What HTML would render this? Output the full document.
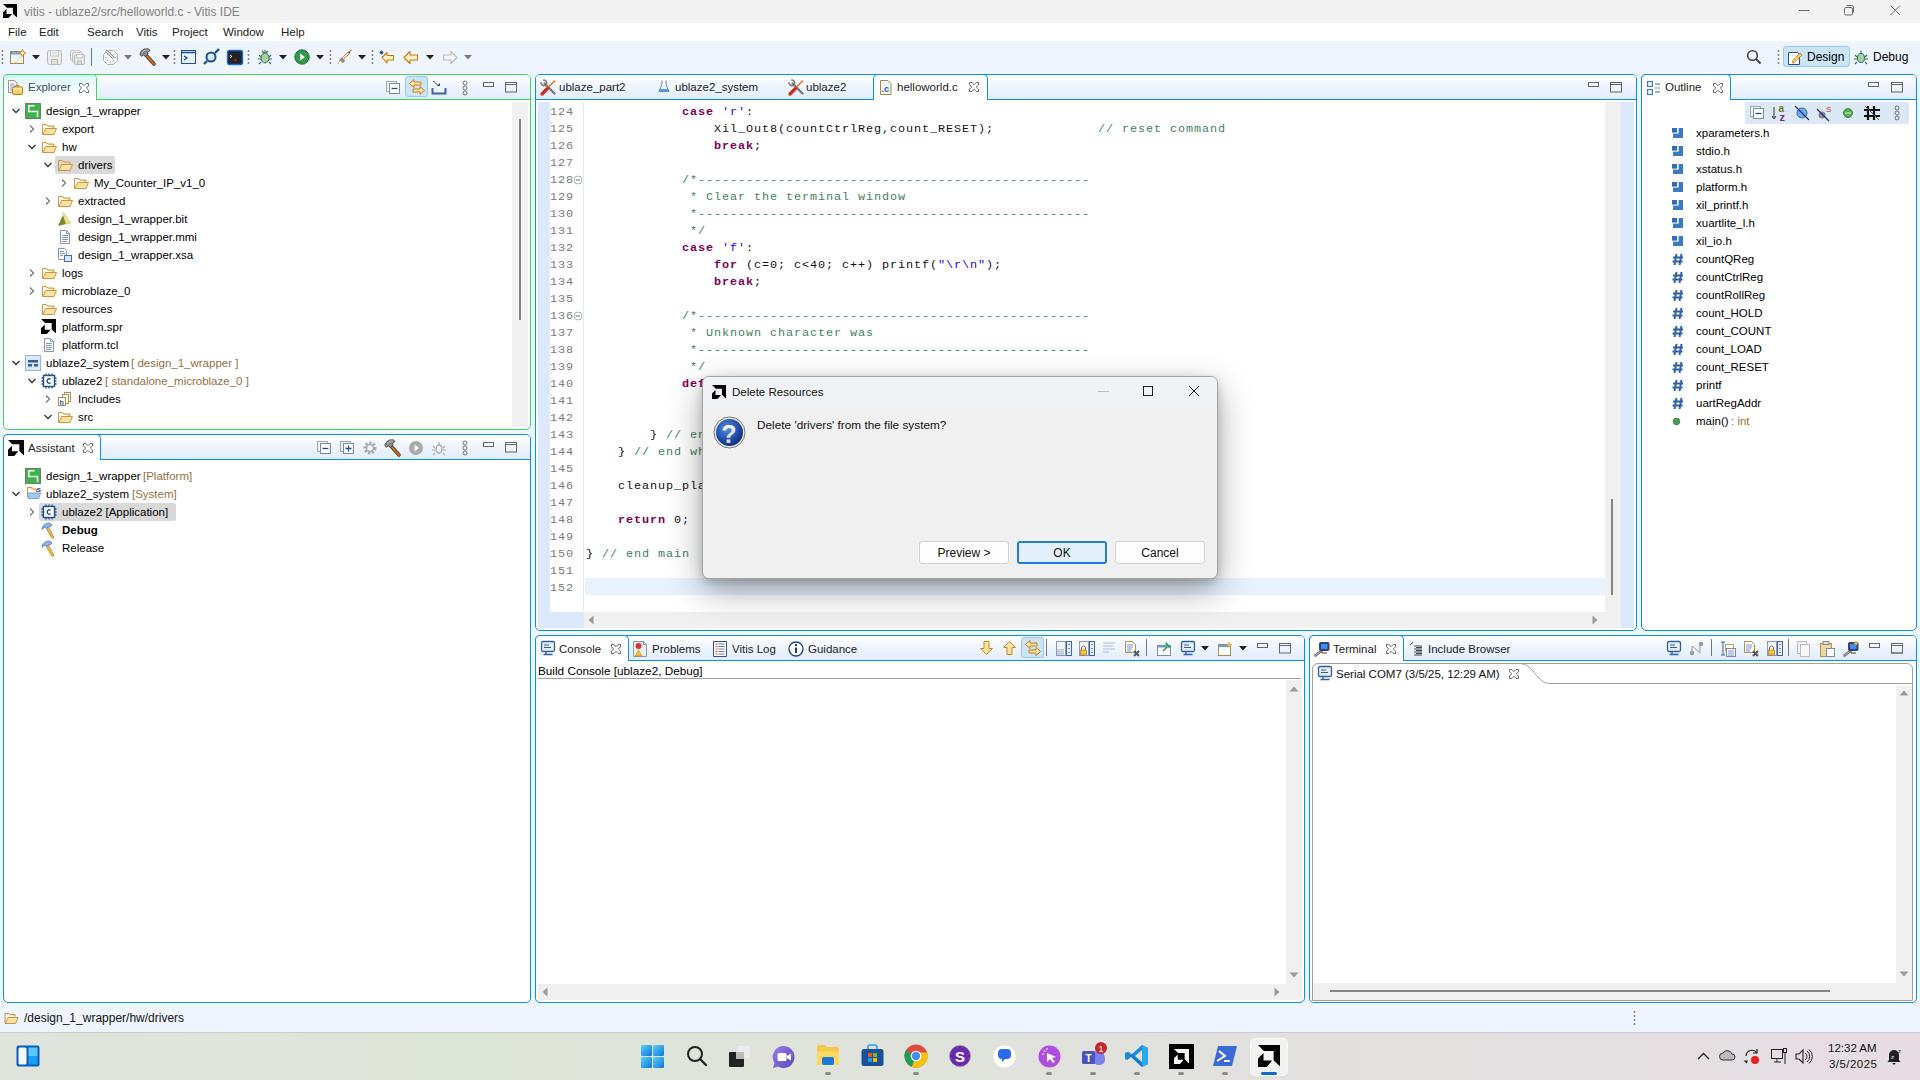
<!DOCTYPE html><html><head><meta charset="utf-8"><style>
html,body{margin:0;padding:0;width:1920px;height:1080px;overflow:hidden;background:#eff5fe;font-family:"Liberation Sans", sans-serif;}
.t{position:absolute;white-space:pre;font-family:"Liberation Sans", sans-serif;}
.m{position:absolute;white-space:pre;font-family:"Liberation Mono", monospace;font-size:11.8px;letter-spacing:0.92px;line-height:17px;height:17px;color:#111}
svg{overflow:visible}
.kw{color:#7f0055;font-weight:bold}
.st{color:#2a00ff}
.cm{color:#3f7f5f}
</style></head><body><div style="position:absolute;left:0px;top:0px;width:1920px;height:23px;background:#f3f3f3"></div><svg style="position:absolute;left:3px;top:4px" width="14" height="14" viewBox="0 0 100 100"><g fill="#000"><path d="M0 0H100V97L71 69V27H27Z"/><path d="M25 36V71H64L39 100H0V61Z"/></g></svg><div class="t" style="left:24px;top:3px;height:18px;line-height:18px;font-size:12px;color:#808080;">vitis - ublaze2/src/helloworld.c - Vitis IDE</div><div style="position:absolute;left:1799px;top:10px;width:10px;height:1px;background:#6a6a6a"></div><svg style="position:absolute;left:1844px;top:5px" width="12" height="12" viewBox="0 0 12 12"><rect x="0.5" y="2.5" width="8" height="7.5" rx="1.5" fill="none" stroke="#6a6a6a"/><path d="M2.5 0.5h5a2 2 0 0 1 2 2v5" fill="none" stroke="#6a6a6a"/></svg><svg style="position:absolute;left:1890px;top:5px" width="11" height="11" viewBox="0 0 11 11"><path d="M0.5 0.5l9.5 9.5M10 0.5l-9.5 9.5" stroke="#6a6a6a" stroke-width="1"/></svg><div style="position:absolute;left:0px;top:23px;width:1920px;height:18px;background:#fff"></div><div class="t" style="left:8px;top:23px;height:18px;line-height:18px;font-size:11.5px;color:#222;">File</div><div class="t" style="left:39px;top:23px;height:18px;line-height:18px;font-size:11.5px;color:#222;">Edit</div><div class="t" style="left:87px;top:23px;height:18px;line-height:18px;font-size:11.5px;color:#222;">Search</div><div class="t" style="left:136px;top:23px;height:18px;line-height:18px;font-size:11.5px;color:#222;">Vitis</div><div class="t" style="left:172px;top:23px;height:18px;line-height:18px;font-size:11.5px;color:#222;">Project</div><div class="t" style="left:223px;top:23px;height:18px;line-height:18px;font-size:11.5px;color:#222;">Window</div><div class="t" style="left:281px;top:23px;height:18px;line-height:18px;font-size:11.5px;color:#222;">Help</div><div style="position:absolute;left:0px;top:41px;width:1920px;height:33px;background:#eff5fe"></div><svg style="position:absolute;left:1px;top:49px" width="3" height="16" viewBox="0 0 3 16"><path d="M1.5 1v2M1.5 5v2M1.5 9v2M1.5 13v2" stroke="#888" stroke-width="1.6"/></svg><svg style="position:absolute;left:10px;top:49px" width="16" height="16" viewBox="0 0 16 16"><rect x="0.5" y="2.5" width="13" height="12" fill="#eef6fc" stroke="#a08a50"/><rect x="1" y="3" width="12" height="2.5" fill="#5a9ae0"/><path d="M2 4h1.5M4.5 4h1.5M7 4h1.5" stroke="#cfe4fa" stroke-width="0.8"/><path d="M3 14c4-1 7-4 9-8" stroke="#f5e0a0" stroke-width="1.2" fill="none"/><path d="M12.5 0.5l1.2 2.3 2.3 1.2-2.3 1.2-1.2 2.3-1.2-2.3-2.3-1.2 2.3-1.2z" fill="#fbe8b0" stroke="#c8861a" stroke-width="0.9"/></svg><svg style="position:absolute;left:32px;top:55px" width="8" height="5" viewBox="0 0 8 5"><path d="M0 0h8l-4 4.5z" fill="#222"/></svg><svg style="position:absolute;left:47px;top:50px" width="16" height="16" viewBox="0 0 16 16"><rect x="0.5" y="0.5" width="14" height="14" rx="2" fill="#ececec" stroke="#b8b8b8"/><rect x="3.5" y="0.5" width="8" height="5.5" fill="#f4f4f4" stroke="#c8c8c8"/><path d="M5 2.5h5M5 4h5" stroke="#d0d0d0" stroke-width="0.7"/><rect x="4.5" y="9.5" width="6" height="5" fill="#e2e2e2" stroke="#b8b8b8"/></svg><svg style="position:absolute;left:70px;top:50px" width="16" height="16" viewBox="0 0 16 16"><rect x="0.5" y="0.5" width="10" height="10" rx="1.5" fill="#eee" stroke="#c8c8c8"/><rect x="2.5" y="2.5" width="10" height="10" rx="1.5" fill="#eee" stroke="#c0c0c0"/><rect x="4.5" y="4.5" width="10" height="10" rx="1.5" fill="#ececec" stroke="#b8b8b8"/><rect x="6.5" y="4.5" width="6" height="3.5" fill="#f4f4f4" stroke="#c8c8c8"/><rect x="7.5" y="11" width="4" height="3.5" fill="#e2e2e2" stroke="#b8b8b8"/></svg><div style="position:absolute;left:91px;top:48px;width:1px;height:18px;background:#777"></div><svg style="position:absolute;left:103px;top:50px" width="15" height="15" viewBox="0 0 15 15"><path d="M4.5 0.5h6l4 4v6l-4 4h-6l-4-4v-6z" fill="#f2f4f6" stroke="#a8b4c0"/><path d="M7.5 2v1.5M7.5 11.5V13M2 7.5h1.5M11.5 7.5H13M3.8 3.8l1 1M10.2 10.2l1 1M11.2 3.8l-1 1M3.8 11.2l1-1" stroke="#999" stroke-width="0.8"/><path d="M2.5 1.5l7 7 1.5-1.5-7-7z" fill="#ddd" stroke="#888" stroke-width="0.8"/></svg><svg style="position:absolute;left:124px;top:55px" width="8" height="5" viewBox="0 0 8 5"><path d="M0 0h8l-4 4.5z" fill="#777"/></svg><svg style="position:absolute;left:139px;top:48px" width="18" height="18" viewBox="0 0 18 18"><path d="M6.5 6.5l8.5 9.5" stroke="#6a3a10" stroke-width="3.6" stroke-linecap="round"/><path d="M6.5 6.5l8.5 9.5" stroke="#c07a3a" stroke-width="1.8" stroke-linecap="round"/><path d="M0.8 6.5L2 3.5 5 1 9.5 0.8 11 2.5 8.5 4 9 6 6.5 8.5 4.5 7 2.5 8.2z" fill="#8a8a8a" stroke="#3a3a3a" stroke-width="0.8" stroke-linejoin="round"/><path d="M3 4.5l3-2.5h3" stroke="#c8c8c8" stroke-width="0.8" fill="none"/></svg><svg style="position:absolute;left:162px;top:55px" width="8" height="5" viewBox="0 0 8 5"><path d="M0 0h8l-4 4.5z" fill="#222"/></svg><svg style="position:absolute;left:173px;top:49px" width="3" height="16" viewBox="0 0 3 16"><path d="M1.5 1v2M1.5 5v2M1.5 9v2M1.5 13v2" stroke="#888" stroke-width="1.6"/></svg><svg style="position:absolute;left:181px;top:50px" width="15" height="14" viewBox="0 0 15 14"><rect x="0.5" y="0.5" width="14" height="13" fill="#e8f0fa" stroke="#1f4f9a"/><path d="M0.5 2.5h14" stroke="#1f4f9a" stroke-width="1.5"/><path d="M3 6l3 2-3 2" fill="none" stroke="#1f3f8a" stroke-width="1.3"/></svg><svg style="position:absolute;left:203px;top:48px" width="18" height="18" viewBox="0 0 18 18"><circle cx="8" cy="9" r="4.5" fill="#d8e8f8" stroke="#1f4f8f" stroke-width="2"/><path d="M4 13l-3 3M12 5l4-4" stroke="#1f4f8f" stroke-width="2.4"/></svg><svg style="position:absolute;left:227px;top:50px" width="16" height="15" viewBox="0 0 16 15"><rect x="0.5" y="0.5" width="15" height="14" rx="2" fill="#222" stroke="#1a6ae0" stroke-width="1.4"/><path d="M3 5l2 1.5-2 1.5" stroke="#fff" fill="none"/><path d="M7 10h3" stroke="#c33"/></svg><svg style="position:absolute;left:247px;top:49px" width="3" height="16" viewBox="0 0 3 16"><path d="M1.5 1v2M1.5 5v2M1.5 9v2M1.5 13v2" stroke="#888" stroke-width="1.6"/></svg><svg style="position:absolute;left:256px;top:48px" width="18" height="18" viewBox="0 0 18 18"><ellipse cx="9" cy="10" rx="4" ry="5" fill="#a9d0a0" stroke="#2f6f5f"/><path d="M9 5v-3M3 7l2 2M15 7l-2 2M2 11h3M16 11h-3M3 16l2-2M15 16l-2-2M6 3l2 2M12 3l-2 2" stroke="#2f6f5f" stroke-width="1.1"/></svg><svg style="position:absolute;left:279px;top:55px" width="8" height="5" viewBox="0 0 8 5"><path d="M0 0h8l-4 4.5z" fill="#222"/></svg><svg style="position:absolute;left:294px;top:49px" width="16" height="16" viewBox="0 0 16 16"><circle cx="8" cy="8" r="7.2" fill="#2f9a4a" stroke="#1f6a3a"/><path d="M6 4.5l5 3.5-5 3.5z" fill="#fff"/></svg><svg style="position:absolute;left:316px;top:55px" width="8" height="5" viewBox="0 0 8 5"><path d="M0 0h8l-4 4.5z" fill="#222"/></svg><svg style="position:absolute;left:329px;top:49px" width="3" height="16" viewBox="0 0 3 16"><path d="M1.5 1v2M1.5 5v2M1.5 9v2M1.5 13v2" stroke="#888" stroke-width="1.6"/></svg><svg style="position:absolute;left:337px;top:49px" width="17" height="16" viewBox="0 0 17 16"><path d="M1.5 15l1.5-4 7.5-7.5 4-2.5-2.5 4L4.5 12.5z" fill="#fbe0a0" stroke="#c8862a" stroke-width="0.8" stroke-linejoin="round"/><path d="M3.5 9.5l3.5 3.5" stroke="#8a8a8a" stroke-width="3.2"/><path d="M2 14.5l2-2" stroke="#fff" stroke-width="1.2"/><circle cx="12" cy="3.5" r="0.9" fill="#2a5aa0"/></svg><svg style="position:absolute;left:358px;top:55px" width="8" height="5" viewBox="0 0 8 5"><path d="M0 0h8l-4 4.5z" fill="#222"/></svg><svg style="position:absolute;left:371px;top:49px" width="3" height="16" viewBox="0 0 3 16"><path d="M1.5 1v2M1.5 5v2M1.5 9v2M1.5 13v2" stroke="#888" stroke-width="1.6"/></svg><svg style="position:absolute;left:379px;top:50px" width="18" height="14" viewBox="0 0 18 14"><path d="M3 7.5l5-5v3h6.5v4.5H8v3z" fill="#fff3cc" stroke="#c8780a" stroke-width="1.1" stroke-linejoin="round"/><path d="M0.5 2.5h4M2.5 0.5v4M1 1l3 3M4 1l-3 3" stroke="#2a4aa0" stroke-width="0.9"/></svg><svg style="position:absolute;left:403px;top:50px" width="16" height="14" viewBox="0 0 16 14"><path d="M1 7.5l6-6v3.5h7.5v5H7v3.5z" fill="#fff3cc" stroke="#c8780a" stroke-width="1.1" stroke-linejoin="round"/></svg><svg style="position:absolute;left:426px;top:55px" width="8" height="5" viewBox="0 0 8 5"><path d="M0 0h8l-4 4.5z" fill="#222"/></svg><svg style="position:absolute;left:442px;top:50px" width="16" height="14" viewBox="0 0 16 14"><path d="M15 7.5l-6-6v3.5H1.5v5H9v3.5z" fill="#f5f5f5" stroke="#bbb" stroke-width="1.1" stroke-linejoin="round"/></svg><svg style="position:absolute;left:464px;top:55px" width="8" height="5" viewBox="0 0 8 5"><path d="M0 0h8l-4 4.5z" fill="#777"/></svg><svg style="position:absolute;left:1746px;top:49px" width="16" height="16" viewBox="0 0 16 16"><circle cx="6.5" cy="6.5" r="4.8" fill="none" stroke="#444" stroke-width="1.6"/><path d="M10 10l4.5 4.5" stroke="#444" stroke-width="1.9"/></svg><svg style="position:absolute;left:1777px;top:49px" width="3" height="16" viewBox="0 0 3 16"><path d="M1.5 1v2M1.5 5v2M1.5 9v2M1.5 13v2" stroke="#888" stroke-width="1.6"/></svg><div style="position:absolute;left:1783px;top:46px;width:67px;height:21px;background:#cce4f7;border:1px solid #99c9ef;border-radius:3px;box-sizing:border-box"></div><svg style="position:absolute;left:1787px;top:50px" width="16" height="16" viewBox="0 0 16 16"><path d="M1.5 2.5h9l2 2v10h-11z" fill="#fff" stroke="#2a4a8a"/><path d="M5 13l1-3 7-7 2 2-7 7z" fill="#f5c860" stroke="#a07020" stroke-width="0.6"/></svg><div class="t" style="left:1807px;top:48px;height:18px;line-height:18px;font-size:12px;color:#000;">Design</div><svg style="position:absolute;left:1853px;top:49px" width="16" height="16" viewBox="0 0 16 16"><ellipse cx="8" cy="9" rx="3.5" ry="4.5" fill="#a9d0a0" stroke="#2f6f5f"/><path d="M8 4.5v-3M2 6l2 2M14 6l-2 2M1 10h3M15 10h-3M2 15l2-2M14 15l-2-2" stroke="#2f6f5f" stroke-width="1.1"/></svg><div class="t" style="left:1873px;top:48px;height:18px;line-height:18px;font-size:12px;color:#000;">Debug</div><div style="position:absolute;left:3px;top:74px;width:528px;height:356px;border:1px solid #40d45a;border-radius:5px;background:#fff;box-sizing:border-box;overflow:hidden"></div><div style="position:absolute;left:4px;top:75px;width:526px;height:24px;background:linear-gradient(#fefeff, #e0ecfd);border-radius:4px 4px 0 0"></div><div style="position:absolute;left:3px;top:99px;width:528px;height:1px;background:#40d45a"></div><div style="position:absolute;left:3px;top:74px;width:94px;height:26px;background:#fff;border-top:1px solid #40d45a;border-right:1px solid #40d45a;box-sizing:border-box;border-left:1px solid #40d45a;border-radius:5px 5px 0 0;"></div><div style="position:absolute;left:4px;top:99px;width:92px;height:1px;background:#fff"></div><div style="position:absolute;left:4px;top:75px;width:92px;height:24px;background:linear-gradient(#d8f6f8, #f4fdfd 60%, #ffffff);border-radius:4px 4px 0 0"></div><svg style="position:absolute;left:7px;top:79px" width="17" height="17" viewBox="0 0 17 17"><path d="M1.5 1.5h6l2.5 2.5v9.5h-8.5z" fill="#fff" stroke="#a89070"/><path d="M3 5h4.5M3 7h5M3 9h5M3 11h5" stroke="#5a7ad0" stroke-width="0.8"/><defs><linearGradient id="fg1" x1="0" y1="0" x2="0" y2="1"><stop offset="0" stop-color="#fdf0b8"/><stop offset="1" stop-color="#f0c048"/></linearGradient></defs><path d="M8.5 8V6.5h3.5V8" fill="none" stroke="#b8801a"/><rect x="5.5" y="8" width="10" height="7.5" rx="1.3" fill="url(#fg1)" stroke="#b8801a"/></svg><div class="t" style="left:28px;top:78px;height:18px;line-height:18px;font-size:11.5px;color:#3a4f6a;">Explorer</div><svg style="position:absolute;left:79px;top:83px" width="10" height="10" viewBox="0 0 10 10"><path d="M0.5 0.5H2.8L5 2.7L7.2 0.5H9.5V2.8L7.3 5L9.5 7.2V9.5H7.2L5 7.3L2.8 9.5H0.5V7.2L2.7 5L0.5 2.8Z" fill="#fff" stroke="#555" stroke-width="0.9" stroke-linejoin="miter"/></svg><svg style="position:absolute;left:386px;top:81px" width="14" height="13" viewBox="0 0 14 13"><rect x="0.5" y="0.5" width="10" height="10" fill="#eef4fb" stroke="#9ab"/><rect x="3.5" y="2.5" width="10" height="10" fill="#fff" stroke="#7a8aa0"/><path d="M5.5 7.5h6" stroke="#1f4f8f" stroke-width="1.3"/></svg><div style="position:absolute;left:405px;top:76px;width:23px;height:21px;background:#cce4f7;border:1px solid #99c9ef;border-radius:3px;box-sizing:border-box"></div><svg style="position:absolute;left:409px;top:79px" width="16" height="16" viewBox="0 0 16 16"><path d="M0.5 4.5L5 0.5V3H12V6H5V8.5Z" fill="#fce7b0" stroke="#c97a10" stroke-width="1" stroke-linejoin="round"/><path d="M15.5 11.5L11 7.5V10H4V13H11V15.5Z" fill="#fce7b0" stroke="#c97a10" stroke-width="1" stroke-linejoin="round"/></svg><svg style="position:absolute;left:431px;top:80px" width="16" height="15" viewBox="0 0 16 15"><path d="M2 1l6 5" stroke="#1f3f8f" stroke-width="0.9"/><path d="M6 6h3v-3z" fill="#1f3f8f"/><path d="M1.5 8v5.5h13v-5.5" fill="none" stroke="#3f62a8" stroke-width="2"/></svg><svg style="position:absolute;left:462px;top:80px" width="6" height="16" viewBox="0 0 6 16"><circle cx="3" cy="3" r="2" fill="none" stroke="#666" stroke-width="0.9"/><circle cx="3" cy="8" r="2" fill="none" stroke="#666" stroke-width="0.9"/><circle cx="3" cy="13" r="2" fill="none" stroke="#666" stroke-width="0.9"/></svg><svg style="position:absolute;left:483px;top:82px" width="12" height="6" viewBox="0 0 12 6"><rect x="0.5" y="0.5" width="10" height="4" fill="none" stroke="#666"/></svg><svg style="position:absolute;left:505px;top:82px" width="12" height="11" viewBox="0 0 12 11"><rect x="0.5" y="0.5" width="11" height="9.5" fill="none" stroke="#666"/><path d="M0.5 2.5h11" stroke="#666"/></svg><div style="position:absolute;left:512px;top:102px;width:16px;height:325px;background:#f0f0f0"></div><div style="position:absolute;left:519px;top:119px;width:2px;height:201px;background:#858585"></div><div style="position:absolute;left:3px;top:434px;width:528px;height:569px;border:1px solid #0a90e6;border-radius:5px;background:#fff;box-sizing:border-box;overflow:hidden"></div><div style="position:absolute;left:4px;top:435px;width:526px;height:24px;background:linear-gradient(#fefeff, #e0ecfd);border-radius:4px 4px 0 0"></div><div style="position:absolute;left:3px;top:459px;width:528px;height:1px;background:#0a90e6"></div><div style="position:absolute;left:3px;top:434px;width:98px;height:26px;background:#fff;border-top:1px solid #0a90e6;border-right:1px solid #0a90e6;box-sizing:border-box;border-left:1px solid #0a90e6;border-radius:5px 5px 0 0;"></div><div style="position:absolute;left:4px;top:459px;width:96px;height:1px;background:#fff"></div><svg style="position:absolute;left:8px;top:440px" width="16" height="16" viewBox="0 0 100 100"><g fill="#000"><path d="M0 0H100V97L71 69V27H27Z"/><path d="M25 36V71H64L39 100H0V61Z"/></g></svg><div class="t" style="left:28px;top:439px;height:18px;line-height:18px;font-size:11.5px;color:#222;">Assistant</div><svg style="position:absolute;left:83px;top:443px" width="10" height="10" viewBox="0 0 10 10"><path d="M0.5 0.5H2.8L5 2.7L7.2 0.5H9.5V2.8L7.3 5L9.5 7.2V9.5H7.2L5 7.3L2.8 9.5H0.5V7.2L2.7 5L0.5 2.8Z" fill="#fff" stroke="#555" stroke-width="0.9" stroke-linejoin="miter"/></svg><svg style="position:absolute;left:317px;top:441px" width="14" height="13" viewBox="0 0 14 13"><rect x="0.5" y="0.5" width="10" height="10" fill="#eef4fb" stroke="#9ab"/><rect x="3.5" y="2.5" width="10" height="10" fill="#fff" stroke="#7a8aa0"/><path d="M5.5 7.5h6" stroke="#1f4f8f" stroke-width="1.3"/></svg><svg style="position:absolute;left:340px;top:441px" width="14" height="13" viewBox="0 0 14 13"><rect x="0.5" y="0.5" width="10" height="10" fill="#eef4fb" stroke="#9ab"/><rect x="3.5" y="2.5" width="10" height="10" fill="#fff" stroke="#7a8aa0"/><path d="M5.5 7.5h6M8.5 4.5v6" stroke="#1f4f8f" stroke-width="1.3"/></svg><svg style="position:absolute;left:362px;top:440px" width="16" height="16" viewBox="0 0 16 16"><circle cx="8" cy="8" r="5" fill="none" stroke="#aaa" stroke-width="3" stroke-dasharray="2.2 1.5"/><circle cx="8" cy="8" r="3.5" fill="none" stroke="#aaa" stroke-width="1.5"/></svg><svg style="position:absolute;left:384px;top:439px" width="18" height="18" viewBox="0 0 18 18"><path d="M6.5 6.5l8.5 9.5" stroke="#6a3a10" stroke-width="3.6" stroke-linecap="round"/><path d="M6.5 6.5l8.5 9.5" stroke="#c07a3a" stroke-width="1.8" stroke-linecap="round"/><path d="M0.8 6.5L2 3.5 5 1 9.5 0.8 11 2.5 8.5 4 9 6 6.5 8.5 4.5 7 2.5 8.2z" fill="#8a8a8a" stroke="#3a3a3a" stroke-width="0.8" stroke-linejoin="round"/><path d="M3 4.5l3-2.5h3" stroke="#c8c8c8" stroke-width="0.8" fill="none"/></svg><svg style="position:absolute;left:408px;top:440px" width="16" height="16" viewBox="0 0 16 16"><circle cx="8" cy="8" r="7" fill="#aaa"/><path d="M6.5 4.5l4.5 3.5-4.5 3.5z" fill="#fff"/></svg><svg style="position:absolute;left:431px;top:440px" width="16" height="16" viewBox="0 0 16 16"><ellipse cx="8" cy="9" rx="3" ry="4" fill="none" stroke="#aaa" stroke-width="1.4"/><path d="M8 5v-3M2 6l2 2M14 6l-2 2M1 10h3M15 10h-3M2 15l2-2M14 15l-2-2" stroke="#aaa" stroke-width="1.1"/></svg><svg style="position:absolute;left:462px;top:440px" width="6" height="16" viewBox="0 0 6 16"><circle cx="3" cy="3" r="2" fill="none" stroke="#666" stroke-width="0.9"/><circle cx="3" cy="8" r="2" fill="none" stroke="#666" stroke-width="0.9"/><circle cx="3" cy="13" r="2" fill="none" stroke="#666" stroke-width="0.9"/></svg><svg style="position:absolute;left:483px;top:442px" width="12" height="6" viewBox="0 0 12 6"><rect x="0.5" y="0.5" width="10" height="4" fill="none" stroke="#666"/></svg><svg style="position:absolute;left:505px;top:442px" width="12" height="11" viewBox="0 0 12 11"><rect x="0.5" y="0.5" width="11" height="9.5" fill="none" stroke="#666"/><path d="M0.5 2.5h11" stroke="#666"/></svg><div style="position:absolute;left:535px;top:74px;width:1102px;height:557px;border:1px solid #0a90e6;border-radius:5px;background:#fff;box-sizing:border-box;overflow:hidden"></div><div style="position:absolute;left:536px;top:75px;width:1100px;height:24px;background:linear-gradient(#fefeff, #e0ecfd);border-radius:4px 4px 0 0"></div><div style="position:absolute;left:535px;top:99px;width:1102px;height:1px;background:#0a90e6"></div><div style="position:absolute;left:873px;top:74px;width:115px;height:26px;background:#fff;border-top:1px solid #0a90e6;border-right:1px solid #0a90e6;box-sizing:border-box;border-left:1px solid #0a90e6;border-radius:5px 5px 0 0;"></div><div style="position:absolute;left:874px;top:99px;width:113px;height:1px;background:#fff"></div><svg style="position:absolute;left:540px;top:79px" width="17" height="17" viewBox="0 0 17 17"><path d="M4.5 4.5l10 10" stroke="#7a7a7a" stroke-width="2.4" stroke-linecap="round"/><path d="M1.2 3.2a2.8 2.8 0 1 0 2-2" fill="none" stroke="#7a7a7a" stroke-width="1.6"/><path d="M8 8.5l6.5-6.5" stroke="#e8742a" stroke-width="1.6" stroke-linecap="round"/><path d="M2 15l5.5-5.5" stroke="#d42a1a" stroke-width="3.2" stroke-linecap="round"/></svg><div class="t" style="left:559px;top:78px;height:18px;line-height:18px;font-size:11.5px;color:#222;">ublaze_part2</div><svg style="position:absolute;left:658px;top:79px" width="12" height="15" viewBox="0 0 12 15"><path d="M4 1.5v4L1 12.5h10l-3-7v-4" fill="#fff" stroke="#6f8fb8" stroke-width="1.1"/><path d="M2.2 10h7.6l1 2.5h-9.6z" fill="#4f9ae0"/></svg><div class="t" style="left:675px;top:78px;height:18px;line-height:18px;font-size:11.5px;color:#222;">ublaze2_system</div><svg style="position:absolute;left:788px;top:79px" width="17" height="17" viewBox="0 0 17 17"><path d="M4.5 4.5l10 10" stroke="#7a7a7a" stroke-width="2.4" stroke-linecap="round"/><path d="M1.2 3.2a2.8 2.8 0 1 0 2-2" fill="none" stroke="#7a7a7a" stroke-width="1.6"/><path d="M8 8.5l6.5-6.5" stroke="#e8742a" stroke-width="1.6" stroke-linecap="round"/><path d="M2 15l5.5-5.5" stroke="#d42a1a" stroke-width="3.2" stroke-linecap="round"/></svg><div class="t" style="left:806px;top:78px;height:18px;line-height:18px;font-size:11.5px;color:#222;">ublaze2</div><svg style="position:absolute;left:880px;top:80px" width="12" height="15" viewBox="0 0 12 15"><path d="M0.5 0.5h7.5l3 3v11h-10.5z" fill="#eef3fa" stroke="#b08a40"/><text x="1.5" y="12" font-size="9" font-family="Liberation Sans" fill="#2b5fa8" font-weight="bold">.c</text></svg><div class="t" style="left:897px;top:78px;height:18px;line-height:18px;font-size:11.5px;color:#222;">helloworld.c</div><svg style="position:absolute;left:969px;top:82px" width="10" height="10" viewBox="0 0 10 10"><path d="M0.5 0.5H2.8L5 2.7L7.2 0.5H9.5V2.8L7.3 5L9.5 7.2V9.5H7.2L5 7.3L2.8 9.5H0.5V7.2L2.7 5L0.5 2.8Z" fill="#fff" stroke="#555" stroke-width="0.9" stroke-linejoin="miter"/></svg><svg style="position:absolute;left:1588px;top:82px" width="12" height="6" viewBox="0 0 12 6"><rect x="0.5" y="0.5" width="10" height="4" fill="none" stroke="#666"/></svg><svg style="position:absolute;left:1610px;top:82px" width="12" height="11" viewBox="0 0 12 11"><rect x="0.5" y="0.5" width="11" height="9.5" fill="none" stroke="#666"/><path d="M0.5 2.5h11" stroke="#666"/></svg><div style="position:absolute;left:1641px;top:74px;width:276px;height:557px;border:1px solid #0a90e6;border-radius:5px;background:#fff;box-sizing:border-box;overflow:hidden"></div><div style="position:absolute;left:1642px;top:75px;width:274px;height:24px;background:linear-gradient(#fefeff, #e0ecfd);border-radius:4px 4px 0 0"></div><div style="position:absolute;left:1641px;top:99px;width:276px;height:1px;background:#0a90e6"></div><div style="position:absolute;left:1641px;top:74px;width:90px;height:26px;background:#fff;border-top:1px solid #0a90e6;border-right:1px solid #0a90e6;box-sizing:border-box;border-left:1px solid #0a90e6;border-radius:5px 5px 0 0;"></div><div style="position:absolute;left:1642px;top:99px;width:88px;height:1px;background:#fff"></div><svg style="position:absolute;left:1647px;top:81px" width="14" height="14" viewBox="0 0 14 14"><rect x="0.5" y="0.5" width="5" height="5" fill="#dbe8f8" stroke="#3f72b8"/><rect x="0.5" y="8.5" width="5" height="5" fill="#dbe8f8" stroke="#3f72b8"/><path d="M8 3h5M8 7h2M11 7h2M8 11h5" stroke="#3f72b8" stroke-width="1"/></svg><div class="t" style="left:1665px;top:78px;height:18px;line-height:18px;font-size:11.5px;color:#222;">Outline</div><svg style="position:absolute;left:1713px;top:83px" width="10" height="10" viewBox="0 0 10 10"><path d="M0.5 0.5H2.8L5 2.7L7.2 0.5H9.5V2.8L7.3 5L9.5 7.2V9.5H7.2L5 7.3L2.8 9.5H0.5V7.2L2.7 5L0.5 2.8Z" fill="#fff" stroke="#555" stroke-width="0.9" stroke-linejoin="miter"/></svg><svg style="position:absolute;left:1868px;top:82px" width="12" height="6" viewBox="0 0 12 6"><rect x="0.5" y="0.5" width="10" height="4" fill="none" stroke="#666"/></svg><svg style="position:absolute;left:1891px;top:82px" width="12" height="11" viewBox="0 0 12 11"><rect x="0.5" y="0.5" width="11" height="9.5" fill="none" stroke="#666"/><path d="M0.5 2.5h11" stroke="#666"/></svg><div style="position:absolute;left:1745px;top:102px;width:164px;height:22px;background:#dde8f6"></div><div style="position:absolute;left:535px;top:635px;width:770px;height:368px;border:1px solid #0a90e6;border-radius:5px;background:#fff;box-sizing:border-box;overflow:hidden"></div><div style="position:absolute;left:536px;top:636px;width:768px;height:24px;background:linear-gradient(#fefeff, #e0ecfd);border-radius:4px 4px 0 0"></div><div style="position:absolute;left:535px;top:660px;width:770px;height:1px;background:#0a90e6"></div><div style="position:absolute;left:535px;top:635px;width:94px;height:26px;background:#fff;border-top:1px solid #0a90e6;border-right:1px solid #0a90e6;box-sizing:border-box;border-left:1px solid #0a90e6;border-radius:5px 5px 0 0;"></div><div style="position:absolute;left:536px;top:660px;width:92px;height:1px;background:#fff"></div><svg style="position:absolute;left:541px;top:641px" width="14" height="15" viewBox="0 0 14 15"><rect x="0.5" y="0.5" width="13" height="10" rx="1.5" fill="#e8eef8" stroke="#2f5f9f" stroke-width="1.3"/><path d="M3 4h5M3 6.5h7" stroke="#2f5f9f"/><path d="M5 11v2M2.5 13.5h9" stroke="#2f5f9f" stroke-width="1.3"/></svg><div class="t" style="left:559px;top:640px;height:18px;line-height:18px;font-size:11.5px;color:#222;">Console</div><svg style="position:absolute;left:611px;top:644px" width="10" height="10" viewBox="0 0 10 10"><path d="M0.5 0.5H2.8L5 2.7L7.2 0.5H9.5V2.8L7.3 5L9.5 7.2V9.5H7.2L5 7.3L2.8 9.5H0.5V7.2L2.7 5L0.5 2.8Z" fill="#fff" stroke="#555" stroke-width="0.9" stroke-linejoin="miter"/></svg><svg style="position:absolute;left:633px;top:641px" width="15" height="16" viewBox="0 0 15 16"><path d="M0.5 0.5h10l3 3v12h-13z" fill="#eef2f8" stroke="#8a98b0"/><path d="M10.5 0.5v3h3" fill="none" stroke="#8a98b0"/><circle cx="5.5" cy="5" r="3" fill="#e03030"/><path d="M5.5 9l3.5 6h-7z" fill="#f5c030" stroke="#c08a10" stroke-width="0.6"/></svg><div class="t" style="left:652px;top:640px;height:18px;line-height:18px;font-size:11.5px;color:#222;">Problems</div><svg style="position:absolute;left:713px;top:641px" width="14" height="16" viewBox="0 0 14 16"><path d="M0.5 0.5h13v15h-13z" fill="#fff" stroke="#2f4f9f"/><path d="M2.5 3h2M2.5 5.5h2M2.5 8h2M2.5 10.5h2M2.5 13h2" stroke="#e04040" stroke-width="1"/><path d="M5.5 3h6M5.5 5.5h6M5.5 8h6M5.5 10.5h6M5.5 13h6" stroke="#6a7ab0" stroke-width="1"/></svg><div class="t" style="left:732px;top:640px;height:18px;line-height:18px;font-size:11.5px;color:#222;">Vitis Log</div><svg style="position:absolute;left:788px;top:641px" width="16" height="16" viewBox="0 0 16 16"><circle cx="8" cy="8" r="7" fill="#fff" stroke="#1f3f7f" stroke-width="1.3"/><path d="M8 6.5v5.5" stroke="#1f3f7f" stroke-width="2"/><circle cx="8" cy="4" r="1.2" fill="#1f3f7f"/></svg><div class="t" style="left:808px;top:640px;height:18px;line-height:18px;font-size:11.5px;color:#222;">Guidance</div><div class="t" style="left:538px;top:662px;height:18px;line-height:18px;font-size:11.75px;color:#000;">Build Console [ublaze2, Debug]</div><div style="position:absolute;left:538px;top:678px;width:763px;height:1px;background:#a0a0a0"></div><div style="position:absolute;left:1286px;top:680px;width:16px;height:304px;background:#f0f0f0"></div><svg style="position:absolute;left:1289px;top:686px" width="10" height="6" viewBox="0 0 10 6"><path d="M0.5 5.5l4.5-5 4.5 5z" fill="#9a9a9a"/></svg><svg style="position:absolute;left:1289px;top:972px" width="10" height="6" viewBox="0 0 10 6"><path d="M0.5 0.5l4.5 5 4.5-5z" fill="#9a9a9a"/></svg><div style="position:absolute;left:538px;top:984px;width:764px;height:16px;background:#f0f0f0"></div><svg style="position:absolute;left:542px;top:987px" width="6" height="10" viewBox="0 0 6 10"><path d="M5.5 0.5l-5 4.5 5 4.5z" fill="#9a9a9a"/></svg><svg style="position:absolute;left:1274px;top:987px" width="6" height="10" viewBox="0 0 6 10"><path d="M0.5 0.5l5 4.5-5 4.5z" fill="#9a9a9a"/></svg><div style="position:absolute;left:1309px;top:635px;width:608px;height:368px;border:1px solid #0a90e6;border-radius:5px;background:#fff;box-sizing:border-box;overflow:hidden"></div><div style="position:absolute;left:1310px;top:636px;width:606px;height:24px;background:linear-gradient(#fefeff, #e0ecfd);border-radius:4px 4px 0 0"></div><div style="position:absolute;left:1309px;top:660px;width:608px;height:1px;background:#0a90e6"></div><div style="position:absolute;left:1309px;top:635px;width:95px;height:26px;background:#fff;border-top:1px solid #0a90e6;border-right:1px solid #0a90e6;box-sizing:border-box;border-left:1px solid #0a90e6;border-radius:5px 5px 0 0;"></div><div style="position:absolute;left:1310px;top:660px;width:93px;height:1px;background:#fff"></div><svg style="position:absolute;left:1314px;top:641px" width="16" height="16" viewBox="0 0 16 16"><path d="M1.5 14.5l5-4" stroke="#666" stroke-width="2.6" stroke-linecap="round"/><path d="M1.5 14.5l5-4" stroke="#ccc" stroke-width="1"/><rect x="5.5" y="1.5" width="9.5" height="8" rx="1" fill="#2a3a8a" stroke="#444"/><rect x="7" y="3" width="6.5" height="5" fill="#3a8ef0"/><path d="M8 10v2h5" fill="none" stroke="#444"/></svg><div class="t" style="left:1333px;top:640px;height:18px;line-height:18px;font-size:11.5px;color:#222;">Terminal</div><svg style="position:absolute;left:1386px;top:644px" width="10" height="10" viewBox="0 0 10 10"><path d="M0.5 0.5H2.8L5 2.7L7.2 0.5H9.5V2.8L7.3 5L9.5 7.2V9.5H7.2L5 7.3L2.8 9.5H0.5V7.2L2.7 5L0.5 2.8Z" fill="#fff" stroke="#555" stroke-width="0.9" stroke-linejoin="miter"/></svg><svg style="position:absolute;left:1409px;top:641px" width="16" height="16" viewBox="0 0 16 16"><path d="M1 4l3-3" stroke="#1f3f9f"/><path d="M5 5h8M5 8h8M5 11h8M5 14h8M7 6.5h6M7 9.5h6M7 12.5h6" stroke="#333" stroke-width="0.9"/></svg><div class="t" style="left:1428px;top:640px;height:18px;line-height:18px;font-size:11.5px;color:#222;">Include Browser</div><svg style="position:absolute;left:1869px;top:643px" width="12" height="6" viewBox="0 0 12 6"><rect x="0.5" y="0.5" width="10" height="4" fill="none" stroke="#666"/></svg><svg style="position:absolute;left:1891px;top:643px" width="12" height="11" viewBox="0 0 12 11"><rect x="0.5" y="0.5" width="11" height="9.5" fill="none" stroke="#666"/><path d="M0.5 2.5h11" stroke="#666"/></svg><div style="position:absolute;left:1312px;top:663px;width:601px;height:338px;border:1px solid #a0a0a0;border-radius:6px 6px 0 0;box-sizing:border-box;background:#fff"></div><svg style="position:absolute;left:1312px;top:663px" width="601" height="22" viewBox="0 0 601 22"><path d="M205 0.5 C 212 0.5, 216 2, 221 8 S 230 20.5, 238 20.5 H 601" fill="none" stroke="#a0a0a0"/></svg><svg style="position:absolute;left:1318px;top:666px" width="14" height="15" viewBox="0 0 14 15"><rect x="0.5" y="0.5" width="13" height="10" rx="1.5" fill="#e8eef8" stroke="#2f5f9f" stroke-width="1.3"/><path d="M3 4h5M3 6.5h7" stroke="#2f5f9f"/><path d="M5 11v2M2.5 13.5h9" stroke="#2f5f9f" stroke-width="1.3"/></svg><div class="t" style="left:1336px;top:665px;height:18px;line-height:18px;font-size:11.5px;color:#111;">Serial COM7 (3/5/25, 12:29 AM)</div><svg style="position:absolute;left:1509px;top:669px" width="10" height="10" viewBox="0 0 10 10"><path d="M0.5 0.5H2.8L5 2.7L7.2 0.5H9.5V2.8L7.3 5L9.5 7.2V9.5H7.2L5 7.3L2.8 9.5H0.5V7.2L2.7 5L0.5 2.8Z" fill="#fff" stroke="#555" stroke-width="0.9" stroke-linejoin="miter"/></svg><div style="position:absolute;left:1896px;top:686px;width:16px;height:298px;background:#f0f0f0"></div><svg style="position:absolute;left:1899px;top:690px" width="10" height="6" viewBox="0 0 10 6"><path d="M0.5 5.5l4.5-5 4.5 5z" fill="#9a9a9a"/></svg><svg style="position:absolute;left:1899px;top:971px" width="10" height="6" viewBox="0 0 10 6"><path d="M0.5 0.5l4.5 5 4.5-5z" fill="#9a9a9a"/></svg><div style="position:absolute;left:1313px;top:983px;width:599px;height:17px;background:#f0f0f0"></div><div style="position:absolute;left:1330px;top:990px;width:500px;height:2px;background:#858585"></div><svg style="position:absolute;left:11px;top:106px" width="10" height="10" viewBox="0 0 10 10"><path d="M1.5 3l3.5 3.5L8.5 3" fill="none" stroke="#333" stroke-width="1.3"/></svg><svg style="position:absolute;left:25px;top:103px" width="16" height="16" viewBox="0 0 16 16"><rect x="0.5" y="0.5" width="15" height="15" fill="#3bb54a" stroke="#777"/><path d="M3.5 2.8H9.5M3.8 2.5V8.5H12.5V14" fill="none" stroke="#fff" stroke-width="1.4"/></svg><div class="t" style="left:46px;top:102px;height:18px;line-height:18px;font-size:11.5px;color:#000;">design_1_wrapper</div><svg style="position:absolute;left:27px;top:124px" width="10" height="10" viewBox="0 0 10 10"><path d="M3 1.5l3.5 3.5L3 8.5" fill="none" stroke="#777" stroke-width="1.3"/></svg><svg style="position:absolute;left:41px;top:121px" width="16" height="16" viewBox="0 0 16 16"><path d="M1.5 3.5h4l1.5 1.5h6v2.5" fill="#f7dc9a" stroke="#c9963e"/><path d="M1.5 3.5V13.5h11.5l2.5-6h-11l-2.5 6" fill="#f9e2a6" stroke="#c9963e" stroke-linejoin="round"/></svg><div class="t" style="left:62px;top:120px;height:18px;line-height:18px;font-size:11.5px;color:#000;">export</div><svg style="position:absolute;left:27px;top:142px" width="10" height="10" viewBox="0 0 10 10"><path d="M1.5 3l3.5 3.5L8.5 3" fill="none" stroke="#333" stroke-width="1.3"/></svg><svg style="position:absolute;left:41px;top:139px" width="16" height="16" viewBox="0 0 16 16"><path d="M1.5 3.5h4l1.5 1.5h6v2.5" fill="#f7dc9a" stroke="#c9963e"/><path d="M1.5 3.5V13.5h11.5l2.5-6h-11l-2.5 6" fill="#f9e2a6" stroke="#c9963e" stroke-linejoin="round"/></svg><div class="t" style="left:62px;top:138px;height:18px;line-height:18px;font-size:11.5px;color:#000;">hw</div><div style="position:absolute;left:55px;top:156px;width:60px;height:18px;background:#d9d9d9;border-radius:2px"></div><svg style="position:absolute;left:43px;top:160px" width="10" height="10" viewBox="0 0 10 10"><path d="M1.5 3l3.5 3.5L8.5 3" fill="none" stroke="#333" stroke-width="1.3"/></svg><svg style="position:absolute;left:57px;top:157px" width="16" height="16" viewBox="0 0 16 16"><path d="M1.5 3.5h4l1.5 1.5h6v2.5" fill="#f7dc9a" stroke="#c9963e"/><path d="M1.5 3.5V13.5h11.5l2.5-6h-11l-2.5 6" fill="#f9e2a6" stroke="#c9963e" stroke-linejoin="round"/></svg><div class="t" style="left:78px;top:156px;height:18px;line-height:18px;font-size:11.5px;color:#000;">drivers</div><svg style="position:absolute;left:59px;top:178px" width="10" height="10" viewBox="0 0 10 10"><path d="M3 1.5l3.5 3.5L3 8.5" fill="none" stroke="#777" stroke-width="1.3"/></svg><svg style="position:absolute;left:73px;top:175px" width="16" height="16" viewBox="0 0 16 16"><path d="M1.5 3.5h4l1.5 1.5h6v2.5" fill="#f7dc9a" stroke="#c9963e"/><path d="M1.5 3.5V13.5h11.5l2.5-6h-11l-2.5 6" fill="#f9e2a6" stroke="#c9963e" stroke-linejoin="round"/></svg><div class="t" style="left:94px;top:174px;height:18px;line-height:18px;font-size:11.5px;color:#000;">My_Counter_IP_v1_0</div><svg style="position:absolute;left:43px;top:196px" width="10" height="10" viewBox="0 0 10 10"><path d="M3 1.5l3.5 3.5L3 8.5" fill="none" stroke="#777" stroke-width="1.3"/></svg><svg style="position:absolute;left:57px;top:193px" width="16" height="16" viewBox="0 0 16 16"><path d="M1.5 3.5h4l1.5 1.5h6v2.5" fill="#f7dc9a" stroke="#c9963e"/><path d="M1.5 3.5V13.5h11.5l2.5-6h-11l-2.5 6" fill="#f9e2a6" stroke="#c9963e" stroke-linejoin="round"/></svg><div class="t" style="left:78px;top:192px;height:18px;line-height:18px;font-size:11.5px;color:#000;">extracted</div><svg style="position:absolute;left:57px;top:211px" width="16" height="16" viewBox="0 0 16 16"><path d="M1 15L6 4l3 9z" fill="#7a8a2a"/><path d="M6 1l3 12 5-1z" fill="#f3e39a" stroke="#d9c060" stroke-width="0.6"/></svg><div class="t" style="left:78px;top:210px;height:18px;line-height:18px;font-size:11.5px;color:#000;">design_1_wrapper.bit</div><svg style="position:absolute;left:57px;top:229px" width="16" height="16" viewBox="0 0 16 16"><path d="M3.5 1.5h6l3 3v10h-9z" fill="#fff" stroke="#8a96ac"/><path d="M9.5 1.5v3h3" fill="none" stroke="#8a96ac"/><path d="M5 6.5h6M5 8.5h6M5 10.5h6M5 12.5h5" stroke="#7f96c4" stroke-width="1"/></svg><div class="t" style="left:78px;top:228px;height:18px;line-height:18px;font-size:11.5px;color:#000;">design_1_wrapper.mmi</div><svg style="position:absolute;left:57px;top:247px" width="16" height="16" viewBox="0 0 16 16"><path d="M1.5 1.5h6l2 2v9h-8z" fill="#fff" stroke="#8a96ac"/><path d="M3 4.5h4M3 6.5h5M3 8.5h3" stroke="#7f96c4" stroke-width="1"/><rect x="7.5" y="8.5" width="7" height="6" fill="#dbe8f8" stroke="#3d6fb4"/></svg><div class="t" style="left:78px;top:246px;height:18px;line-height:18px;font-size:11.5px;color:#000;">design_1_wrapper.xsa</div><svg style="position:absolute;left:27px;top:268px" width="10" height="10" viewBox="0 0 10 10"><path d="M3 1.5l3.5 3.5L3 8.5" fill="none" stroke="#777" stroke-width="1.3"/></svg><svg style="position:absolute;left:41px;top:265px" width="16" height="16" viewBox="0 0 16 16"><path d="M1.5 3.5h4l1.5 1.5h6v2.5" fill="#f7dc9a" stroke="#c9963e"/><path d="M1.5 3.5V13.5h11.5l2.5-6h-11l-2.5 6" fill="#f9e2a6" stroke="#c9963e" stroke-linejoin="round"/></svg><div class="t" style="left:62px;top:264px;height:18px;line-height:18px;font-size:11.5px;color:#000;">logs</div><svg style="position:absolute;left:27px;top:286px" width="10" height="10" viewBox="0 0 10 10"><path d="M3 1.5l3.5 3.5L3 8.5" fill="none" stroke="#777" stroke-width="1.3"/></svg><svg style="position:absolute;left:41px;top:283px" width="16" height="16" viewBox="0 0 16 16"><path d="M1.5 3.5h4l1.5 1.5h6v2.5" fill="#f7dc9a" stroke="#c9963e"/><path d="M1.5 3.5V13.5h11.5l2.5-6h-11l-2.5 6" fill="#f9e2a6" stroke="#c9963e" stroke-linejoin="round"/></svg><div class="t" style="left:62px;top:282px;height:18px;line-height:18px;font-size:11.5px;color:#000;">microblaze_0</div><svg style="position:absolute;left:41px;top:301px" width="16" height="16" viewBox="0 0 16 16"><path d="M1.5 3.5h4l1.5 1.5h6v2.5" fill="#f7dc9a" stroke="#c9963e"/><path d="M1.5 3.5V13.5h11.5l2.5-6h-11l-2.5 6" fill="#f9e2a6" stroke="#c9963e" stroke-linejoin="round"/></svg><div class="t" style="left:62px;top:300px;height:18px;line-height:18px;font-size:11.5px;color:#000;">resources</div><svg style="position:absolute;left:41px;top:319px" width="15" height="15" viewBox="0 0 100 100"><g fill="#000"><path d="M0 0H100V97L71 69V27H27Z"/><path d="M25 36V71H64L39 100H0V61Z"/></g></svg><div class="t" style="left:62px;top:318px;height:18px;line-height:18px;font-size:11.5px;color:#000;">platform.spr</div><svg style="position:absolute;left:41px;top:337px" width="16" height="16" viewBox="0 0 16 16"><path d="M3.5 1.5h6l3 3v10h-9z" fill="#fff" stroke="#8a96ac"/><path d="M9.5 1.5v3h3" fill="none" stroke="#8a96ac"/><path d="M5 6.5h6M5 8.5h6M5 10.5h6M5 12.5h5" stroke="#7f96c4" stroke-width="1"/></svg><div class="t" style="left:62px;top:336px;height:18px;line-height:18px;font-size:11.5px;color:#000;">platform.tcl</div><svg style="position:absolute;left:11px;top:358px" width="10" height="10" viewBox="0 0 10 10"><path d="M1.5 3l3.5 3.5L8.5 3" fill="none" stroke="#333" stroke-width="1.3"/></svg><svg style="position:absolute;left:25px;top:355px" width="16" height="16" viewBox="0 0 16 16"><rect x="0.5" y="0.5" width="15" height="15" fill="#dbe8f8" stroke="#3f72b8" stroke-dasharray="1 1"/><rect x="3" y="5" width="10" height="2.5" fill="#2f5f9f"/><rect x="3" y="9" width="4" height="2.5" fill="#2f5f9f"/><rect x="9" y="9" width="4" height="2.5" fill="#2f5f9f"/></svg><div class="t" style="left:46px;top:354px;height:18px;line-height:18px;font-size:11.5px;color:#000;">ublaze2_system</div><div class="t" style="left:131px;top:354px;height:18px;line-height:18px;font-size:11.5px;color:#93703f;">[ design_1_wrapper ]</div><svg style="position:absolute;left:27px;top:376px" width="10" height="10" viewBox="0 0 10 10"><path d="M1.5 3l3.5 3.5L8.5 3" fill="none" stroke="#333" stroke-width="1.3"/></svg><svg style="position:absolute;left:41px;top:373px" width="16" height="16" viewBox="0 0 16 16"><rect x="2.5" y="2.5" width="11" height="11" fill="#fff" stroke="#1f4f8f" stroke-width="1.4"/><path d="M5 0.5v2M8 0.5v2M11 0.5v2M5 13.5v2M8 13.5v2M11 13.5v2M0.5 5h2M0.5 8h2M0.5 11h2M13.5 5h2M13.5 8h2M13.5 11h2" stroke="#1f4f8f" stroke-width="1.3"/><path d="M9.6 6.2a2.2 2.2 0 1 0 0 3.6" fill="none" stroke="#1f4f8f" stroke-width="1.4"/></svg><div class="t" style="left:62px;top:372px;height:18px;line-height:18px;font-size:11.5px;color:#000;">ublaze2</div><div class="t" style="left:105px;top:372px;height:18px;line-height:18px;font-size:11.5px;color:#93703f;">[ standalone_microblaze_0 ]</div><svg style="position:absolute;left:43px;top:394px" width="10" height="10" viewBox="0 0 10 10"><path d="M3 1.5l3.5 3.5L3 8.5" fill="none" stroke="#777" stroke-width="1.3"/></svg><svg style="position:absolute;left:57px;top:391px" width="16" height="16" viewBox="0 0 16 16"><rect x="7.5" y="1.5" width="6" height="9" fill="#fff" stroke="#b09050"/><rect x="5.5" y="3.5" width="6" height="9" fill="#fff" stroke="#b09050"/><rect x="1.5" y="6.5" width="7" height="8" fill="#fff" stroke="#b09050"/><text x="2.5" y="13.5" font-size="7" font-family="Liberation Sans" fill="#2b4f9a" font-weight="bold">h</text></svg><div class="t" style="left:78px;top:390px;height:18px;line-height:18px;font-size:11.5px;color:#000;">Includes</div><svg style="position:absolute;left:43px;top:412px" width="10" height="10" viewBox="0 0 10 10"><path d="M1.5 3l3.5 3.5L8.5 3" fill="none" stroke="#333" stroke-width="1.3"/></svg><svg style="position:absolute;left:57px;top:409px" width="16" height="16" viewBox="0 0 16 16"><path d="M1.5 3.5h4l1.5 1.5h6v2.5" fill="#f7dc9a" stroke="#c9963e"/><path d="M1.5 3.5V13.5h11.5l2.5-6h-11l-2.5 6" fill="#f9e2a6" stroke="#c9963e" stroke-linejoin="round"/></svg><div class="t" style="left:78px;top:408px;height:18px;line-height:18px;font-size:11.5px;color:#000;">src</div><svg style="position:absolute;left:25px;top:468px" width="16" height="16" viewBox="0 0 16 16"><rect x="0.5" y="0.5" width="15" height="15" fill="#3bb54a" stroke="#777"/><path d="M3.5 2.8H9.5M3.8 2.5V8.5H12.5V14" fill="none" stroke="#fff" stroke-width="1.4"/></svg><div class="t" style="left:46px;top:467px;height:18px;line-height:18px;font-size:11.5px;color:#000;">design_1_wrapper</div><div class="t" style="left:143px;top:467px;height:18px;line-height:18px;font-size:11.5px;color:#93703f;">[Platform]</div><svg style="position:absolute;left:11px;top:489px" width="10" height="10" viewBox="0 0 10 10"><path d="M1.5 3l3.5 3.5L8.5 3" fill="none" stroke="#333" stroke-width="1.3"/></svg><svg style="position:absolute;left:26px;top:485px" width="16" height="16" viewBox="0 0 16 16"><path d="M1.5 2.5h4.5l1.5 1.5h3v3" fill="#f6d690" stroke="#c9963e"/><path d="M1.5 2.5V12" stroke="#c9963e"/><path d="M1.5 8h13l-1.8 5.5H2.5z" fill="#a8c8ec" stroke="#7aa4d0"/><text x="10.5" y="6.5" font-size="8" font-family="Liberation Sans" fill="#24508f" font-weight="bold">s</text></svg><div class="t" style="left:46px;top:485px;height:18px;line-height:18px;font-size:11.5px;color:#000;">ublaze2_system</div><div class="t" style="left:132px;top:485px;height:18px;line-height:18px;font-size:11.5px;color:#93703f;">[System]</div><div style="position:absolute;left:39px;top:503px;width:137px;height:18px;background:#d9d9d9;border-radius:2px"></div><svg style="position:absolute;left:27px;top:507px" width="10" height="10" viewBox="0 0 10 10"><path d="M3 1.5l3.5 3.5L3 8.5" fill="none" stroke="#777" stroke-width="1.3"/></svg><svg style="position:absolute;left:41px;top:504px" width="16" height="16" viewBox="0 0 16 16"><rect x="2.5" y="2.5" width="11" height="11" fill="#fff" stroke="#1f4f8f" stroke-width="1.4"/><path d="M5 0.5v2M8 0.5v2M11 0.5v2M5 13.5v2M8 13.5v2M11 13.5v2M0.5 5h2M0.5 8h2M0.5 11h2M13.5 5h2M13.5 8h2M13.5 11h2" stroke="#1f4f8f" stroke-width="1.3"/><path d="M9.6 6.2a2.2 2.2 0 1 0 0 3.6" fill="none" stroke="#1f4f8f" stroke-width="1.4"/></svg><div class="t" style="left:62px;top:503px;height:18px;line-height:18px;font-size:11.5px;color:#000;">ublaze2 [Application]</div><svg style="position:absolute;left:41px;top:522px" width="16" height="16" viewBox="0 0 16 16"><path d="M6.5 6l5 9" stroke="#b07a20" stroke-width="3" stroke-linecap="round"/><path d="M6.5 6l5 9" stroke="#f2c050" stroke-width="1.6" stroke-linecap="round"/><path d="M1 7.5C1 4 4 1 8.5 1L11 3 9.3 5 7.5 4.6 5.5 6.5 3.8 5.2C2.8 5.8 2 6.8 1 7.5Z" fill="#8ab8e8" stroke="#4a7ab0" stroke-width="0.8" stroke-linejoin="round"/></svg><div class="t" style="left:62px;top:521px;height:18px;line-height:18px;font-size:11.5px;color:#000;font-weight:bold">Debug</div><svg style="position:absolute;left:41px;top:540px" width="16" height="16" viewBox="0 0 16 16"><path d="M6.5 6l5 9" stroke="#b07a20" stroke-width="3" stroke-linecap="round"/><path d="M6.5 6l5 9" stroke="#f2c050" stroke-width="1.6" stroke-linecap="round"/><path d="M1 7.5C1 4 4 1 8.5 1L11 3 9.3 5 7.5 4.6 5.5 6.5 3.8 5.2C2.8 5.8 2 6.8 1 7.5Z" fill="#8ab8e8" stroke="#4a7ab0" stroke-width="0.8" stroke-linejoin="round"/></svg><div class="t" style="left:62px;top:539px;height:18px;line-height:18px;font-size:11.5px;color:#000;">Release</div><svg style="position:absolute;left:1672px;top:128px" width="11" height="10" viewBox="0 0 11 10"><rect x="0" y="0" width="5" height="4.6" fill="#2f6db8"/><rect x="6.6" y="0" width="4.4" height="10" fill="#3b7bc4"/><rect x="1" y="5.6" width="10" height="4.4" fill="#3b7bc4"/></svg><div class="t" style="left:1696px;top:124px;height:18px;line-height:18px;font-size:11.5px;color:#000;">xparameters.h</div><svg style="position:absolute;left:1672px;top:146px" width="11" height="10" viewBox="0 0 11 10"><rect x="0" y="0" width="5" height="4.6" fill="#2f6db8"/><rect x="6.6" y="0" width="4.4" height="10" fill="#3b7bc4"/><rect x="1" y="5.6" width="10" height="4.4" fill="#3b7bc4"/></svg><div class="t" style="left:1696px;top:142px;height:18px;line-height:18px;font-size:11.5px;color:#000;">stdio.h</div><svg style="position:absolute;left:1672px;top:164px" width="11" height="10" viewBox="0 0 11 10"><rect x="0" y="0" width="5" height="4.6" fill="#2f6db8"/><rect x="6.6" y="0" width="4.4" height="10" fill="#3b7bc4"/><rect x="1" y="5.6" width="10" height="4.4" fill="#3b7bc4"/></svg><div class="t" style="left:1696px;top:160px;height:18px;line-height:18px;font-size:11.5px;color:#000;">xstatus.h</div><svg style="position:absolute;left:1672px;top:182px" width="11" height="10" viewBox="0 0 11 10"><rect x="0" y="0" width="5" height="4.6" fill="#2f6db8"/><rect x="6.6" y="0" width="4.4" height="10" fill="#3b7bc4"/><rect x="1" y="5.6" width="10" height="4.4" fill="#3b7bc4"/></svg><div class="t" style="left:1696px;top:178px;height:18px;line-height:18px;font-size:11.5px;color:#000;">platform.h</div><svg style="position:absolute;left:1672px;top:200px" width="11" height="10" viewBox="0 0 11 10"><rect x="0" y="0" width="5" height="4.6" fill="#2f6db8"/><rect x="6.6" y="0" width="4.4" height="10" fill="#3b7bc4"/><rect x="1" y="5.6" width="10" height="4.4" fill="#3b7bc4"/></svg><div class="t" style="left:1696px;top:196px;height:18px;line-height:18px;font-size:11.5px;color:#000;">xil_printf.h</div><svg style="position:absolute;left:1672px;top:218px" width="11" height="10" viewBox="0 0 11 10"><rect x="0" y="0" width="5" height="4.6" fill="#2f6db8"/><rect x="6.6" y="0" width="4.4" height="10" fill="#3b7bc4"/><rect x="1" y="5.6" width="10" height="4.4" fill="#3b7bc4"/></svg><div class="t" style="left:1696px;top:214px;height:18px;line-height:18px;font-size:11.5px;color:#000;">xuartlite_l.h</div><svg style="position:absolute;left:1672px;top:236px" width="11" height="10" viewBox="0 0 11 10"><rect x="0" y="0" width="5" height="4.6" fill="#2f6db8"/><rect x="6.6" y="0" width="4.4" height="10" fill="#3b7bc4"/><rect x="1" y="5.6" width="10" height="4.4" fill="#3b7bc4"/></svg><div class="t" style="left:1696px;top:232px;height:18px;line-height:18px;font-size:11.5px;color:#000;">xil_io.h</div><svg style="position:absolute;left:1672px;top:253px" width="12" height="13" viewBox="0 0 12 13"><path d="M4.5 1L2.5 12M9.5 1L7.5 12M1 4.5h10M0.5 8.5h10" stroke="#2f62a8" stroke-width="2"/></svg><div class="t" style="left:1696px;top:250px;height:18px;line-height:18px;font-size:11.5px;color:#000;">countQReg</div><svg style="position:absolute;left:1672px;top:271px" width="12" height="13" viewBox="0 0 12 13"><path d="M4.5 1L2.5 12M9.5 1L7.5 12M1 4.5h10M0.5 8.5h10" stroke="#2f62a8" stroke-width="2"/></svg><div class="t" style="left:1696px;top:268px;height:18px;line-height:18px;font-size:11.5px;color:#000;">countCtrlReg</div><svg style="position:absolute;left:1672px;top:289px" width="12" height="13" viewBox="0 0 12 13"><path d="M4.5 1L2.5 12M9.5 1L7.5 12M1 4.5h10M0.5 8.5h10" stroke="#2f62a8" stroke-width="2"/></svg><div class="t" style="left:1696px;top:286px;height:18px;line-height:18px;font-size:11.5px;color:#000;">countRollReg</div><svg style="position:absolute;left:1672px;top:307px" width="12" height="13" viewBox="0 0 12 13"><path d="M4.5 1L2.5 12M9.5 1L7.5 12M1 4.5h10M0.5 8.5h10" stroke="#2f62a8" stroke-width="2"/></svg><div class="t" style="left:1696px;top:304px;height:18px;line-height:18px;font-size:11.5px;color:#000;">count_HOLD</div><svg style="position:absolute;left:1672px;top:325px" width="12" height="13" viewBox="0 0 12 13"><path d="M4.5 1L2.5 12M9.5 1L7.5 12M1 4.5h10M0.5 8.5h10" stroke="#2f62a8" stroke-width="2"/></svg><div class="t" style="left:1696px;top:322px;height:18px;line-height:18px;font-size:11.5px;color:#000;">count_COUNT</div><svg style="position:absolute;left:1672px;top:343px" width="12" height="13" viewBox="0 0 12 13"><path d="M4.5 1L2.5 12M9.5 1L7.5 12M1 4.5h10M0.5 8.5h10" stroke="#2f62a8" stroke-width="2"/></svg><div class="t" style="left:1696px;top:340px;height:18px;line-height:18px;font-size:11.5px;color:#000;">count_LOAD</div><svg style="position:absolute;left:1672px;top:361px" width="12" height="13" viewBox="0 0 12 13"><path d="M4.5 1L2.5 12M9.5 1L7.5 12M1 4.5h10M0.5 8.5h10" stroke="#2f62a8" stroke-width="2"/></svg><div class="t" style="left:1696px;top:358px;height:18px;line-height:18px;font-size:11.5px;color:#000;">count_RESET</div><svg style="position:absolute;left:1672px;top:379px" width="12" height="13" viewBox="0 0 12 13"><path d="M4.5 1L2.5 12M9.5 1L7.5 12M1 4.5h10M0.5 8.5h10" stroke="#2f62a8" stroke-width="2"/></svg><div class="t" style="left:1696px;top:376px;height:18px;line-height:18px;font-size:11.5px;color:#000;">printf</div><svg style="position:absolute;left:1672px;top:397px" width="12" height="13" viewBox="0 0 12 13"><path d="M4.5 1L2.5 12M9.5 1L7.5 12M1 4.5h10M0.5 8.5h10" stroke="#2f62a8" stroke-width="2"/></svg><div class="t" style="left:1696px;top:394px;height:18px;line-height:18px;font-size:11.5px;color:#000;">uartRegAddr</div><svg style="position:absolute;left:1672px;top:417px" width="9" height="9" viewBox="0 0 9 9"><circle cx="4.5" cy="4.5" r="3.4" fill="#4a9a5a" stroke="#2f7f3f" stroke-width="0.6"/></svg><div class="t" style="left:1696px;top:412px;height:18px;line-height:18px;font-size:11.5px;color:#000;">main()</div><div class="t" style="left:1731px;top:412px;height:18px;line-height:18px;font-size:11.5px;color:#93703f;">: int</div><svg style="position:absolute;left:1750px;top:106px" width="14" height="13" viewBox="0 0 14 13"><rect x="0.5" y="0.5" width="10" height="10" fill="#eef4fb" stroke="#9ab"/><rect x="3.5" y="2.5" width="10" height="10" fill="#fff" stroke="#7a8aa0"/><path d="M5.5 7.5h6" stroke="#1f4f8f" stroke-width="1.3"/></svg><svg style="position:absolute;left:1771px;top:104px" width="18" height="18" viewBox="0 0 18 18"><path d="M3 3v11M1 12l2 3 2-3" fill="none" stroke="#333" stroke-width="1"/><text x="7.5" y="8" font-size="10" font-family="Liberation Sans" font-weight="bold" fill="#6a7a2a">a</text><text x="8.5" y="17" font-size="11" font-family="Liberation Sans" font-weight="bold" fill="#7a2a8a">z</text></svg><svg style="position:absolute;left:1794px;top:105px" width="16" height="16" viewBox="0 0 16 16"><circle cx="8" cy="8" r="5" fill="#6ab0e8" stroke="#2a6ab8"/><path d="M1 1l14 14" stroke="#1a2a8a" stroke-width="1.3"/></svg><svg style="position:absolute;left:1816px;top:104px" width="18" height="18" viewBox="0 0 18 18"><circle cx="6" cy="11" r="3.5" fill="#888"/><path d="M1 5l12 12" stroke="#1a2a8a" stroke-width="1.3"/><text x="10" y="8" font-size="8" font-family="Liberation Sans" fill="#c33">S</text></svg><svg style="position:absolute;left:1842px;top:107px" width="12" height="12" viewBox="0 0 12 12"><circle cx="6" cy="6" r="4.5" fill="#5aaa5a" stroke="#3a8a3a"/><path d="M3 6h6" stroke="#cfc" stroke-width="1"/></svg><svg style="position:absolute;left:1863px;top:104px" width="18" height="18" viewBox="0 0 18 18"><path d="M5 2v14M11 2v14M1 6h16M1 12h16" stroke="#111" stroke-width="2.2"/><path d="M2 2l14 14" stroke="#555" stroke-width="1"/></svg><svg style="position:absolute;left:1894px;top:105px" width="6" height="16" viewBox="0 0 6 16"><circle cx="3" cy="3" r="2" fill="none" stroke="#666" stroke-width="0.9"/><circle cx="3" cy="8" r="2" fill="none" stroke="#666" stroke-width="0.9"/><circle cx="3" cy="13" r="2" fill="none" stroke="#666" stroke-width="0.9"/></svg><div style="position:absolute;left:538px;top:102px;width:12px;height:510px;background:#dce8fb"></div><div style="position:absolute;left:538px;top:612px;width:46px;height:16px;background:#dce8fb"></div><div style="position:absolute;left:583px;top:102px;width:1px;height:509px;background:#dfe8f5"></div><div style="position:absolute;left:1605px;top:102px;width:16px;height:526px;background:#f0f0f0"></div><div style="position:absolute;left:1621px;top:102px;width:13px;height:526px;background:#dce8fb"></div><div style="position:absolute;left:1611px;top:499px;width:2px;height:96px;background:#858585"></div><div style="position:absolute;left:584px;top:612px;width:1021px;height:16px;background:#f0f0f0"></div><svg style="position:absolute;left:588px;top:615px" width="6" height="10" viewBox="0 0 6 10"><path d="M5.5 0.5l-5 4.5 5 4.5z" fill="#9a9a9a"/></svg><svg style="position:absolute;left:1592px;top:615px" width="6" height="10" viewBox="0 0 6 10"><path d="M0.5 0.5l5 4.5-5 4.5z" fill="#9a9a9a"/></svg><div style="position:absolute;left:585px;top:578px;width:1020px;height:17px;background:#e8f2fe"></div><div class="m" style="left:550px;top:104px;width:24px;text-align:right;color:#7a7a7a">124</div><div class="m kw" style="left:682px;top:104px">case</div><div class="m st" style="left:722px;top:104px">'r'</div><div class="m " style="left:746px;top:104px">:</div><div class="m" style="left:550px;top:121px;width:24px;text-align:right;color:#7a7a7a">125</div><div class="m " style="left:714px;top:121px">Xil_Out8(countCtrlReg,count_RESET);</div><div class="m cm" style="left:1098px;top:121px">// reset command</div><div class="m" style="left:550px;top:138px;width:24px;text-align:right;color:#7a7a7a">126</div><div class="m kw" style="left:714px;top:138px">break</div><div class="m " style="left:754px;top:138px">;</div><div class="m" style="left:550px;top:155px;width:24px;text-align:right;color:#7a7a7a">127</div><div class="m" style="left:550px;top:172px;width:24px;text-align:right;color:#7a7a7a">128</div><div class="m cm" style="left:682px;top:172px">/*-------------------------------------------------</div><div class="m" style="left:550px;top:189px;width:24px;text-align:right;color:#7a7a7a">129</div><div class="m cm" style="left:690px;top:189px">* Clear the terminal window</div><div class="m" style="left:550px;top:206px;width:24px;text-align:right;color:#7a7a7a">130</div><div class="m cm" style="left:690px;top:206px">*-------------------------------------------------</div><div class="m" style="left:550px;top:223px;width:24px;text-align:right;color:#7a7a7a">131</div><div class="m cm" style="left:690px;top:223px">*/</div><div class="m" style="left:550px;top:240px;width:24px;text-align:right;color:#7a7a7a">132</div><div class="m kw" style="left:682px;top:240px">case</div><div class="m st" style="left:722px;top:240px">'f'</div><div class="m " style="left:746px;top:240px">:</div><div class="m" style="left:550px;top:257px;width:24px;text-align:right;color:#7a7a7a">133</div><div class="m kw" style="left:714px;top:257px">for</div><div class="m " style="left:746px;top:257px">(c=0; c&lt;40; c++) printf(</div><div class="m st" style="left:938px;top:257px">"\r\n"</div><div class="m " style="left:986px;top:257px">);</div><div class="m" style="left:550px;top:274px;width:24px;text-align:right;color:#7a7a7a">134</div><div class="m kw" style="left:714px;top:274px">break</div><div class="m " style="left:754px;top:274px">;</div><div class="m" style="left:550px;top:291px;width:24px;text-align:right;color:#7a7a7a">135</div><div class="m" style="left:550px;top:308px;width:24px;text-align:right;color:#7a7a7a">136</div><div class="m cm" style="left:682px;top:308px">/*-------------------------------------------------</div><div class="m" style="left:550px;top:325px;width:24px;text-align:right;color:#7a7a7a">137</div><div class="m cm" style="left:690px;top:325px">* Unknown character was</div><div class="m" style="left:550px;top:342px;width:24px;text-align:right;color:#7a7a7a">138</div><div class="m cm" style="left:690px;top:342px">*-------------------------------------------------</div><div class="m" style="left:550px;top:359px;width:24px;text-align:right;color:#7a7a7a">139</div><div class="m cm" style="left:690px;top:359px">*/</div><div class="m" style="left:550px;top:376px;width:24px;text-align:right;color:#7a7a7a">140</div><div class="m kw" style="left:682px;top:376px">default</div><div class="m " style="left:738px;top:376px">:</div><div class="m" style="left:550px;top:393px;width:24px;text-align:right;color:#7a7a7a">141</div><div class="m " style="left:714px;top:393px">printf(</div><div class="m st" style="left:770px;top:393px">"Unknown"</div><div class="m " style="left:842px;top:393px">);</div><div class="m" style="left:550px;top:410px;width:24px;text-align:right;color:#7a7a7a">142</div><div class="m kw" style="left:714px;top:410px">break</div><div class="m " style="left:754px;top:410px">;</div><div class="m" style="left:550px;top:427px;width:24px;text-align:right;color:#7a7a7a">143</div><div class="m" style="left:650px;top:427px">}</div><div class="m cm" style="left:658px;top:427px"> // end switch</div><div class="m" style="left:550px;top:444px;width:24px;text-align:right;color:#7a7a7a">144</div><div class="m" style="left:618px;top:444px">}</div><div class="m cm" style="left:626px;top:444px"> // end while</div><div class="m" style="left:550px;top:461px;width:24px;text-align:right;color:#7a7a7a">145</div><div class="m" style="left:550px;top:478px;width:24px;text-align:right;color:#7a7a7a">146</div><div class="m " style="left:618px;top:478px">cleanup_platform();</div><div class="m" style="left:550px;top:495px;width:24px;text-align:right;color:#7a7a7a">147</div><div class="m" style="left:550px;top:512px;width:24px;text-align:right;color:#7a7a7a">148</div><div class="m kw" style="left:618px;top:512px">return</div><div class="m " style="left:674px;top:512px">0;</div><div class="m" style="left:550px;top:529px;width:24px;text-align:right;color:#7a7a7a">149</div><div class="m" style="left:550px;top:546px;width:24px;text-align:right;color:#7a7a7a">150</div><div class="m" style="left:586px;top:546px">}</div><div class="m cm" style="left:594px;top:546px"> // end main</div><div class="m" style="left:550px;top:563px;width:24px;text-align:right;color:#7a7a7a">151</div><div class="m" style="left:550px;top:580px;width:24px;text-align:right;color:#7a7a7a">152</div><svg style="position:absolute;left:573px;top:175px" width="10" height="10" viewBox="0 0 10 10"><circle cx="5" cy="5" r="4" fill="#fff" stroke="#9aa" stroke-width="0.9"/><path d="M3 5h4" stroke="#667" stroke-width="1"/></svg><svg style="position:absolute;left:573px;top:311px" width="10" height="10" viewBox="0 0 10 10"><circle cx="5" cy="5" r="4" fill="#fff" stroke="#9aa" stroke-width="0.9"/><path d="M3 5h4" stroke="#667" stroke-width="1"/></svg><div style="position:absolute;left:702px;top:376px;width:516px;height:203px;background:#f0f0f0;border:1px solid #a4a4a4;border-radius:7px;box-sizing:border-box;box-shadow:0 12px 34px rgba(0,0,0,0.34), 0 3px 10px rgba(0,0,0,0.18);overflow:hidden"><div style="position:absolute;left:0;top:0;right:0;height:30px;background:#eff3f5"></div></div><svg style="position:absolute;left:712px;top:385px" width="14" height="14" viewBox="0 0 100 100"><g fill="#000"><path d="M0 0H100V97L71 69V27H27Z"/><path d="M25 36V71H64L39 100H0V61Z"/></g></svg><div class="t" style="left:732px;top:383px;height:18px;line-height:18px;font-size:11.5px;color:#111;">Delete Resources</div><div style="position:absolute;left:1098px;top:391px;width:11px;height:1px;background:#bbb"></div><svg style="position:absolute;left:1142px;top:385px" width="12" height="12" viewBox="0 0 12 12"><rect x="1.5" y="1.5" width="9" height="9" fill="none" stroke="#222" stroke-width="1"/></svg><svg style="position:absolute;left:1188px;top:385px" width="12" height="12" viewBox="0 0 12 12"><path d="M1 1l10 10M11 1l-10 10" stroke="#222" stroke-width="1"/></svg><svg style="position:absolute;left:713px;top:416px" width="33" height="33" viewBox="0 0 33 33"><defs><radialGradient id="qg" cx="40%" cy="35%" r="65%"><stop offset="0" stop-color="#5a8ee0"/><stop offset="0.7" stop-color="#1f4aa8"/><stop offset="1" stop-color="#13307a"/></radialGradient></defs><circle cx="16.5" cy="16.5" r="15.5" fill="#e8e8e8" stroke="#777" stroke-width="1"/><circle cx="16.5" cy="16.5" r="13.5" fill="url(#qg)"/><defs><linearGradient id="qt" x1="0" y1="0" x2="0" y2="1"><stop offset="0" stop-color="#ffffff"/><stop offset="1" stop-color="#c8c8d0"/></linearGradient></defs><text x="16" y="26.5" text-anchor="middle" font-size="25" font-weight="bold" font-family="Liberation Sans" fill="url(#qt)">?</text></svg><div class="t" style="left:757px;top:416px;height:18px;line-height:18px;font-size:11.8px;color:#111;">Delete 'drivers' from the file system?</div><div style="position:absolute;left:919px;top:541px;width:90px;height:23px;background:#fdfdfd;border:1px solid #d0d0d0;border-radius:3px;box-sizing:border-box;"></div><div class="t" style="left:919px;top:541px;width:90px;height:23px;line-height:25px;text-align:center;font-size:12px;color:#111">Preview &gt;</div><div style="position:absolute;left:1017px;top:541px;width:90px;height:23px;background:#e3effa;border:2px solid #1f7fd8;border-radius:3px;box-sizing:border-box;"></div><div class="t" style="left:1017px;top:541px;width:90px;height:23px;line-height:25px;text-align:center;font-size:12px;color:#111">OK</div><div style="position:absolute;left:1115px;top:541px;width:90px;height:23px;background:#fdfdfd;border:1px solid #d0d0d0;border-radius:3px;box-sizing:border-box;"></div><div class="t" style="left:1115px;top:541px;width:90px;height:23px;line-height:25px;text-align:center;font-size:12px;color:#111">Cancel</div><svg style="position:absolute;left:4px;top:1011px" width="16" height="14" viewBox="0 0 16 14"><path d="M1 2.5h4l1 1h5v2" fill="#f7dc9a" stroke="#c9963e"/><path d="M1 2.5V12.5h10.5l2.5-6h-10l-2.5 6" fill="#f9e2a6" stroke="#c9963e" stroke-linejoin="round"/></svg><div class="t" style="left:24px;top:1009px;height:18px;line-height:18px;font-size:12px;color:#111;">/design_1_wrapper/hw/drivers</div><svg style="position:absolute;left:1633px;top:1010px" width="3" height="16" viewBox="0 0 3 16"><path d="M1.5 1v2M1.5 5v2M1.5 9v2M1.5 13v2" stroke="#888" stroke-width="1.6"/></svg><div style="position:absolute;left:0px;top:1032px;width:1920px;height:48px;background:linear-gradient(90deg,#dfe4dc 0%,#dde5d6 25%,#e0e2dc 50%,#e3e0e0 75%,#e6dde3 100%);border-top:1px solid #c9ccc9;box-sizing:border-box"></div><svg style="position:absolute;left:16px;top:1045px" width="24" height="22" viewBox="0 0 24 22"><rect x="0.5" y="0.5" width="23" height="21" rx="2" fill="#0a5cc0"/><rect x="2.5" y="2.5" width="8" height="17" rx="1.5" fill="#f8f8f8"/><rect x="12.5" y="2.5" width="9" height="8.5" fill="#5ec8f8"/><rect x="12.5" y="11" width="9" height="8.5" fill="#1aa0f0"/></svg><svg style="position:absolute;left:641px;top:1045px" width="23" height="23" viewBox="0 0 23 23"><defs><linearGradient id="wg" x1="0" y1="0" x2="1" y2="1"><stop offset="0" stop-color="#5fd0fb"/><stop offset="1" stop-color="#0a78d8"/></linearGradient></defs><rect x="0" y="0" width="11" height="11" rx="1" fill="url(#wg)"/><rect x="12" y="0" width="11" height="11" rx="1" fill="url(#wg)"/><rect x="0" y="12" width="11" height="11" rx="1" fill="url(#wg)"/><rect x="12" y="12" width="11" height="11" rx="1" fill="url(#wg)"/></svg><svg style="position:absolute;left:686px;top:1045px" width="22" height="22" viewBox="0 0 22 22"><circle cx="9" cy="9" r="7" fill="none" stroke="#222" stroke-width="2"/><path d="M14 14l6 6" stroke="#222" stroke-width="2.4" stroke-linecap="round"/></svg><svg style="position:absolute;left:729px;top:1045px" width="23" height="22" viewBox="0 0 23 22"><rect x="7" y="0" width="15" height="14" rx="1.5" fill="#eaeaea" stroke="#ddd"/><rect x="0" y="7" width="15" height="15" rx="1" fill="#222"/><rect x="7" y="7" width="8" height="7" fill="#bbb"/></svg><svg style="position:absolute;left:772px;top:1045px" width="24" height="24" viewBox="0 0 24 24"><defs><linearGradient id="mg" x1="0" y1="0" x2="1" y2="1"><stop offset="0" stop-color="#9a7ce8"/><stop offset="1" stop-color="#5a4ac0"/></linearGradient></defs><path d="M12 1a11 11 0 1 1-6 20.5L1 23l1.5-5A11 11 0 0 1 12 1z" fill="url(#mg)"/><rect x="5.5" y="8" width="9" height="8" rx="1.5" fill="#fff"/><path d="M15 11l4-2.5v7l-4-2.5z" fill="#fff"/></svg><svg style="position:absolute;left:816px;top:1044px" width="24" height="22" viewBox="0 0 24 22"><path d="M1 3a2 2 0 0 1 2-2h6l2 2h10a2 2 0 0 1 2 2v14a2 2 0 0 1-2 2H3a2 2 0 0 1-2-2z" fill="#f5c84a"/><path d="M1 7h22v12a2 2 0 0 1-2 2H3a2 2 0 0 1-2-2z" fill="#fbd865"/><rect x="6" y="13" width="12" height="8" rx="2" fill="#1a78d8"/></svg><svg style="position:absolute;left:861px;top:1044px" width="23" height="23" viewBox="0 0 23 23"><path d="M7 5V3a2 2 0 0 1 2-2h5a2 2 0 0 1 2 2v2" fill="none" stroke="#2aa0f0" stroke-width="1.6"/><rect x="0.5" y="5" width="22" height="17" rx="2.5" fill="#1a4f9a"/><rect x="7" y="9" width="4" height="4" fill="#f25022"/><rect x="12" y="9" width="4" height="4" fill="#7fba00"/><rect x="7" y="14" width="4" height="4" fill="#00a4ef"/><rect x="12" y="14" width="4" height="4" fill="#ffb900"/></svg><svg style="position:absolute;left:904px;top:1044px" width="24" height="24" viewBox="0 0 24 24"><circle cx="12" cy="12" r="11.5" fill="#dd4b3e"/><path d="M12 12L2 6.3A11.5 11.5 0 0 0 7.8 22.7z" fill="#1f9d55"/><path d="M12 12l-4.2 10.7A11.5 11.5 0 0 0 23.2 8.5H12z" fill="#f4c20d"/><path d="M12 12l11.2-3.5A11.5 11.5 0 0 0 12 0.5z" fill="#dd4b3e" opacity="0"/><circle cx="12" cy="12" r="5.3" fill="#fff"/><circle cx="12" cy="12" r="4.2" fill="#4a8af4"/></svg><svg style="position:absolute;left:949px;top:1045px" width="22" height="22" viewBox="0 0 22 22"><circle cx="11" cy="11" r="10.5" fill="#6a2ab0" stroke="#888" stroke-width="0.6"/><text x="11" y="16.5" text-anchor="middle" font-size="15" font-weight="bold" font-family="Liberation Sans" fill="#fff">S</text></svg><svg style="position:absolute;left:993px;top:1045px" width="23" height="23" viewBox="0 0 23 23"><circle cx="11.5" cy="11.5" r="11" fill="#fff"/><path d="M5 8a4 4 0 0 1 4-4h5a4 4 0 0 1 4 4v2a4 4 0 0 1-4 4h-2l-3 3v-3a4 4 0 0 1-4-4z" fill="#2a6ae8"/></svg><svg style="position:absolute;left:1038px;top:1045px" width="23" height="23" viewBox="0 0 23 23"><circle cx="11.5" cy="11.5" r="11" fill="#b04ce0"/><path d="M9 8l9 4-4 1 3 4-2 1-3-4-3 3z" fill="#fff"/><path d="M6 5l1.5 2M4 9h2M9 3v2" stroke="#fff" stroke-width="1"/></svg><svg style="position:absolute;left:1080px;top:1042px" width="28" height="26" viewBox="0 0 28 26"><circle cx="19" cy="12" r="5" fill="#7b83eb"/><rect x="13" y="11" width="12" height="12" rx="5" fill="#7b83eb"/><rect x="2" y="9" width="13" height="13" rx="1.5" fill="#4b53bc"/><text x="8.5" y="19.5" text-anchor="middle" font-size="10" font-weight="bold" font-family="Liberation Sans" fill="#fff">T</text><circle cx="21" cy="6" r="6" fill="#c4262e"/><text x="21" y="9.5" text-anchor="middle" font-size="9" font-family="Liberation Sans" fill="#fff">1</text></svg><svg style="position:absolute;left:1125px;top:1044px" width="24" height="24" viewBox="0 0 24 24"><path d="M17 1l6 3v16l-6 3L6 13l-4 3-2-1V9l2-1 4 3z" fill="#1a8ae0"/><path d="M17 1l6 3v16l-6 3z" fill="#2aa8f0"/><path d="M17 6v12l-7-6z" fill="#e0e5d8"/><path d="M2 8.5l2-1 13 12.5v3z" fill="#0a6ac0" opacity="0.6"/></svg><div style="position:absolute;left:1169px;top:1044px;width:25px;height:25px;background:#000"></div><svg style="position:absolute;left:1174px;top:1049px" width="15" height="15" viewBox="0 0 100 100"><g fill="#fff"><path d="M0 0H100V97L71 69V27H27Z"/><path d="M25 36V71H64L39 100H0V61Z"/></g></svg><svg style="position:absolute;left:1213px;top:1046px" width="25" height="20" viewBox="0 0 25 20"><path d="M5 0h19l-5 20H0z" fill="#3a6ad8"/><path d="M6 5l6 5-8 5" fill="none" stroke="#fff" stroke-width="2"/><path d="M11 15h6" stroke="#fff" stroke-width="2"/></svg><div style="position:absolute;left:1250px;top:1038px;width:38px;height:38px;background:rgba(255,255,255,0.55);border-radius:5px;border:1px solid rgba(255,255,255,0.6);box-sizing:border-box"></div><svg style="position:absolute;left:1258px;top:1045px" width="22" height="22" viewBox="0 0 100 100"><g fill="#000"><path d="M0 0H100V97L71 69V27H27Z"/><path d="M25 36V71H64L39 100H0V61Z"/></g></svg><div style="position:absolute;left:1261px;top:1072px;width:16px;height:3px;background:#0a6ad0;border-radius:2px"></div><div style="position:absolute;left:825px;top:1072px;width:6px;height:3px;background:#8a8a8a;border-radius:2px"></div><div style="position:absolute;left:913px;top:1072px;width:6px;height:3px;background:#8a8a8a;border-radius:2px"></div><div style="position:absolute;left:1046px;top:1072px;width:6px;height:3px;background:#8a8a8a;border-radius:2px"></div><div style="position:absolute;left:1090px;top:1072px;width:6px;height:3px;background:#8a8a8a;border-radius:2px"></div><div style="position:absolute;left:1134px;top:1072px;width:6px;height:3px;background:#8a8a8a;border-radius:2px"></div><div style="position:absolute;left:1178px;top:1072px;width:6px;height:3px;background:#8a8a8a;border-radius:2px"></div><div style="position:absolute;left:1222px;top:1072px;width:6px;height:3px;background:#8a8a8a;border-radius:2px"></div><svg style="position:absolute;left:1697px;top:1052px" width="13" height="8" viewBox="0 0 13 8"><path d="M1 7l5.5-5.5L12 7" fill="none" stroke="#222" stroke-width="1.3"/></svg><svg style="position:absolute;left:1719px;top:1049px" width="17" height="12" viewBox="0 0 17 12"><path d="M4 11a3.5 3.5 0 0 1 0-7 5 5 0 0 1 9 1 3 3 0 0 1 0 6z" fill="#bbb" stroke="#333" stroke-width="1"/></svg><svg style="position:absolute;left:1743px;top:1048px" width="18" height="17" viewBox="0 0 18 17"><path d="M3 8a6 6 0 0 1 11-3M15 9" fill="none" stroke="#222" stroke-width="1.2"/><path d="M14 1v4h-4" fill="none" stroke="#222" stroke-width="1.2"/><path d="M4 15l-2-2h3" fill="none" stroke="#222" stroke-width="1.2"/><circle cx="12" cy="12" r="4" fill="#e82020"/></svg><svg style="position:absolute;left:1771px;top:1048px" width="17" height="17" viewBox="0 0 17 17"><rect x="0.5" y="1.5" width="11" height="9" fill="none" stroke="#222"/><path d="M3 14h7M6 11v3" stroke="#222"/><rect x="12.5" y="0.5" width="3" height="4" fill="none" stroke="#222"/><path d="M14 5v11" stroke="#222"/></svg><svg style="position:absolute;left:1795px;top:1048px" width="17" height="17" viewBox="0 0 17 17"><path d="M1 6h3l4-4v13l-4-4H1z" fill="none" stroke="#222" stroke-width="1.1"/><path d="M10 5a4 4 0 0 1 0 7M12 3a7 7 0 0 1 0 11M14 1.5a9 9 0 0 1 0 14" fill="none" stroke="#222" stroke-width="1"/></svg><div class="t" style="left:1828px;top:1039px;height:18px;line-height:18px;font-size:11.5px;color:#111;">12:32 AM</div><div class="t" style="left:1829px;top:1055px;height:18px;line-height:18px;font-size:11.5px;color:#111;letter-spacing:0.45px">3/5/2025</div><svg style="position:absolute;left:1886px;top:1048px" width="17" height="17" viewBox="0 0 17 17"><path d="M3 12V7a5 5 0 0 1 10 0v5l1.5 2h-13z" fill="#222"/><path d="M6.5 15a1.5 1.5 0 0 0 3 0" fill="#222"/><text x="5" y="11" font-size="6" font-family="Liberation Sans" fill="#fff">z</text><text x="12" y="5" font-size="6" font-family="Liberation Sans" fill="#222">z</text></svg><svg style="position:absolute;left:980px;top:641px" width="13" height="14" viewBox="0 0 13 14"><path d="M4 0.5h5v7h3.5L6.5 13.5 0.5 7.5H4z" fill="#fbe3a0" stroke="#c78a20" stroke-linejoin="round"/></svg><svg style="position:absolute;left:1003px;top:641px" width="13" height="14" viewBox="0 0 13 14"><path d="M4 13.5h5v-7h3.5L6.5 0.5 0.5 6.5H4z" fill="#fbe3a0" stroke="#c78a20" stroke-linejoin="round"/></svg><div style="position:absolute;left:1021px;top:637px;width:23px;height:21px;background:#cce4f7;border:1px solid #99c9ef;border-radius:3px;box-sizing:border-box"></div><svg style="position:absolute;left:1025px;top:640px" width="16" height="16" viewBox="0 0 16 16"><path d="M0.5 4.5L5 0.5V3H12V6H5V8.5Z" fill="#fce7b0" stroke="#c97a10" stroke-width="1" stroke-linejoin="round"/><path d="M15.5 11.5L11 7.5V10H4V13H11V15.5Z" fill="#fce7b0" stroke="#c97a10" stroke-width="1" stroke-linejoin="round"/></svg><div style="position:absolute;left:1046px;top:639px;width:1px;height:17px;background:#777"></div><svg style="position:absolute;left:1056px;top:641px" width="16" height="15" viewBox="0 0 16 15"><rect x="0.5" y="0.5" width="9" height="14" fill="#f0f4fa" stroke="#8a9ab8"/><rect x="10.5" y="0.5" width="5" height="14" fill="#e8eef8" stroke="#3f62a8"/><path d="M13 3v1M13 7v1M13 11v1" stroke="#3f62a8" stroke-width="1.4"/><rect x="1" y="8" width="7" height="6" fill="#c8d0e0"/></svg><svg style="position:absolute;left:1079px;top:641px" width="16" height="15" viewBox="0 0 16 15"><rect x="0.5" y="0.5" width="9" height="14" fill="#f0f4fa" stroke="#8a9ab8"/><rect x="10.5" y="0.5" width="5" height="14" fill="#e8eef8" stroke="#3f62a8"/><path d="M13 3v1M13 7v1M13 11v1" stroke="#3f62a8" stroke-width="1.4"/><path d="M2.5 9V7a2 2 0 0 1 4 0v2" fill="none" stroke="#a07020"/><rect x="1.5" y="9" width="6" height="5" fill="#f5c040" stroke="#a07020" stroke-width="0.6"/></svg><svg style="position:absolute;left:1103px;top:642px" width="13" height="12" viewBox="0 0 13 12"><path d="M0 1h12M0 4h10M0 7h12M0 10h6" stroke="#a8b8d8" stroke-width="1"/></svg><svg style="position:absolute;left:1125px;top:641px" width="16" height="16" viewBox="0 0 16 16"><path d="M0.5 0.5h7l3 3v8h-10z" fill="#fff" stroke="#b09050"/><path d="M2 4h6M2 6h6M2 8h5M2 10h4" stroke="#5a7ab0" stroke-width="0.8"/><path d="M9 10l5 5M14 10l-5 5" stroke="#555" stroke-width="2"/></svg><div style="position:absolute;left:1146px;top:639px;width:1px;height:17px;background:#777"></div><svg style="position:absolute;left:1157px;top:641px" width="16" height="16" viewBox="0 0 16 16"><rect x="0.5" y="4.5" width="13" height="10" fill="#fff" stroke="#7a8aa6"/><rect x="0.5" y="4.5" width="13" height="2" fill="#6a9ad8"/><path d="M6 10l4-4" stroke="#2a8a3a" stroke-width="1.2"/><path d="M9 1l5 5-2 1-4-4z" fill="#3aaa4a"/></svg><svg style="position:absolute;left:1181px;top:641px" width="15" height="15" viewBox="0 0 15 15"><rect x="0.5" y="0.5" width="13" height="10" rx="1.5" fill="#e8eef8" stroke="#2f5f9f" stroke-width="1.3"/><path d="M3 4h5M3 6.5h7" stroke="#2f5f9f"/><path d="M5 11v2M2.5 13.5h9" stroke="#2f5f9f" stroke-width="1.3"/></svg><svg style="position:absolute;left:1201px;top:646px" width="8" height="5" viewBox="0 0 8 5"><path d="M0 0h8l-4 4.5z" fill="#222"/></svg><svg style="position:absolute;left:1218px;top:641px" width="16" height="16" viewBox="0 0 16 16"><rect x="0.5" y="3.5" width="12" height="11" fill="#fff" stroke="#9a8a5a"/><rect x="0.5" y="3.5" width="12" height="2.5" fill="#6a9ad8"/><path d="M11 1l1 2 2 .5-2 1 .3 2-1.3-1.5-1.3 1.5.3-2-2-1 2-.5z" fill="#f5d060" stroke="#c09020" stroke-width="0.5"/></svg><svg style="position:absolute;left:1239px;top:646px" width="8" height="5" viewBox="0 0 8 5"><path d="M0 0h8l-4 4.5z" fill="#222"/></svg><svg style="position:absolute;left:1257px;top:643px" width="12" height="6" viewBox="0 0 12 6"><rect x="0.5" y="0.5" width="10" height="4" fill="none" stroke="#666"/></svg><svg style="position:absolute;left:1279px;top:643px" width="12" height="11" viewBox="0 0 12 11"><rect x="0.5" y="0.5" width="11" height="9.5" fill="none" stroke="#666"/><path d="M0.5 2.5h11" stroke="#666"/></svg><svg style="position:absolute;left:1667px;top:641px" width="15" height="15" viewBox="0 0 15 15"><rect x="0.5" y="0.5" width="13" height="10" rx="1.5" fill="#e8eef8" stroke="#2f5f9f" stroke-width="1.3"/><path d="M3 4h5M3 6.5h7" stroke="#2f5f9f"/><path d="M5 11v2M2.5 13.5h9" stroke="#2f5f9f" stroke-width="1.3"/></svg><svg style="position:absolute;left:1689px;top:641px" width="15" height="15" viewBox="0 0 15 15"><circle cx="3" cy="12" r="2.2" fill="#999"/><circle cx="12" cy="3" r="2.2" fill="#999"/><path d="M3 12V5l8 7V4" fill="none" stroke="#999" stroke-width="1"/></svg><div style="position:absolute;left:1711px;top:639px;width:1px;height:17px;background:#777"></div><svg style="position:absolute;left:1720px;top:641px" width="16" height="16" viewBox="0 0 16 16"><path d="M1 1h4M3 1v13M1 14h4" stroke="#3f62a8"/><rect x="5.5" y="3.5" width="8" height="6" fill="#fff" stroke="#c0a060"/><rect x="6.5" y="7.5" width="9" height="8" fill="#fff" stroke="#7a8aa6"/><path d="M8 10h6M8 12h6M8 14h6" stroke="#5a7ab0" stroke-width="0.8"/></svg><svg style="position:absolute;left:1744px;top:641px" width="16" height="16" viewBox="0 0 16 16"><path d="M0.5 0.5h7l3 3v8h-10z" fill="#fff" stroke="#b09050"/><path d="M2 4h6M2 6h6M2 8h5M2 10h4" stroke="#5a7ab0" stroke-width="0.8"/><path d="M9 10l5 5M14 10l-5 5" stroke="#555" stroke-width="2"/></svg><svg style="position:absolute;left:1767px;top:641px" width="16" height="15" viewBox="0 0 16 15"><rect x="0.5" y="0.5" width="9" height="14" fill="#f0f4fa" stroke="#8a9ab8"/><rect x="10.5" y="0.5" width="5" height="14" fill="#e8eef8" stroke="#3f62a8"/><path d="M13 3v1M13 7v1M13 11v1" stroke="#3f62a8" stroke-width="1.4"/><path d="M2.5 9V7a2 2 0 0 1 4 0v2" fill="none" stroke="#a07020"/><rect x="1.5" y="9" width="6" height="5" fill="#f5c040" stroke="#a07020" stroke-width="0.6"/></svg><div style="position:absolute;left:1788px;top:639px;width:1px;height:17px;background:#777"></div><svg style="position:absolute;left:1797px;top:641px" width="14" height="16" viewBox="0 0 14 16"><rect x="0.5" y="0.5" width="9" height="12" fill="#f4f4f4" stroke="#bbb"/><rect x="3.5" y="3.5" width="9" height="12" fill="#f8f8f8" stroke="#bbb"/></svg><svg style="position:absolute;left:1820px;top:641px" width="15" height="16" viewBox="0 0 15 16"><rect x="0.5" y="2.5" width="11" height="13" fill="#f0d8a0" stroke="#b09050"/><rect x="3" y="0.5" width="6" height="3" fill="#ddd" stroke="#888"/><rect x="6.5" y="7.5" width="8" height="8" fill="#fff" stroke="#7a8aa6"/></svg><svg style="position:absolute;left:1843px;top:641px" width="16" height="16" viewBox="0 0 16 16"><path d="M1.5 14.5l5-4" stroke="#666" stroke-width="2.6" stroke-linecap="round"/><path d="M1.5 14.5l5-4" stroke="#ccc" stroke-width="1"/><rect x="5.5" y="1.5" width="9.5" height="8" rx="1" fill="#2a3a8a" stroke="#444"/><rect x="7" y="3" width="6.5" height="5" fill="#3a8ef0"/><path d="M8 10v2h5" fill="none" stroke="#444"/><path d="M13 0l0.8 1.6 1.6 0.8-1.6 0.8-0.8 1.6-0.8-1.6-1.6-0.8 1.6-0.8z" fill="#f5d060" stroke="#b08020" stroke-width="0.5"/></svg><svg style="position:absolute;left:1869px;top:643px" width="12" height="6" viewBox="0 0 12 6"><rect x="0.5" y="0.5" width="10" height="4" fill="none" stroke="#666"/></svg><svg style="position:absolute;left:1891px;top:643px" width="12" height="11" viewBox="0 0 12 11"><rect x="0.5" y="0.5" width="11" height="9.5" fill="none" stroke="#666"/><path d="M0.5 2.5h11" stroke="#666"/></svg></body></html>
